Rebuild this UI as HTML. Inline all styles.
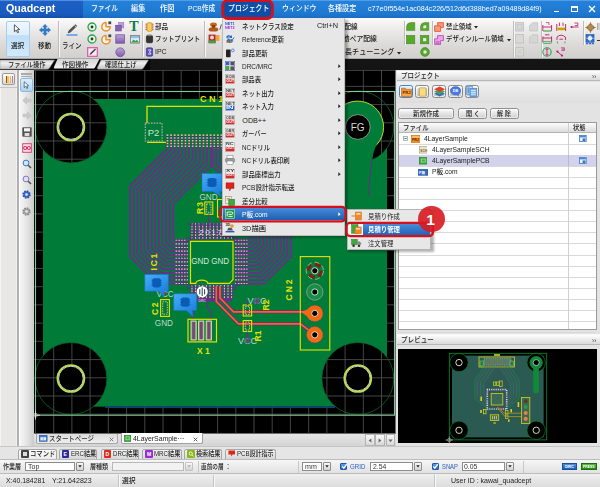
<!DOCTYPE html>
<html lang="ja"><head><meta charset="utf-8"><title>Quadcept</title>
<style>
html,body{margin:0;padding:0;}
body{width:600px;height:487px;overflow:hidden;position:relative;background:#e4e4e4;font-family:"Liberation Sans","Noto Sans CJK JP",sans-serif;}
.b{position:absolute;box-sizing:border-box;}
.t{position:absolute;white-space:nowrap;display:block;}
#app{position:absolute;left:0;top:0;width:600px;height:487px;overflow:hidden;}
</style></head><body><div id="app">
<svg class="b" style="left:0px;top:0px;" width="600" height="487" viewBox="0 0 600 487"><defs><linearGradient id="cog" x1="0" y1="0" x2="0.6" y2="1"><stop offset="0" stop-color="#46aefa"/><stop offset="1" stop-color="#1a7edc"/></linearGradient><clipPath id="cv"><rect x="33.5" y="70" width="362.5" height="363.7"/></clipPath><mask id="fillm"><rect x="43" y="98.9" width="344" height="307.9" fill="#fff"/><circle cx="70.9" cy="127" r="36" fill="#000"/><circle cx="357.8" cy="127" r="36" fill="#000"/><circle cx="70.9" cy="378.5" r="36" fill="#000"/><circle cx="357.8" cy="378.5" r="36" fill="#000"/><rect x="357.8" y="90" width="40" height="37" fill="#000"/><rect x="30" y="90" width="40.9" height="37" fill="#000"/><rect x="30" y="378.5" width="40.9" height="37" fill="#000"/><rect x="357.8" y="378.5" width="40" height="37" fill="#000"/></mask></defs><g clip-path="url(#cv)"><rect x="33.5" y="70" width="362.5" height="363.7" fill="#000"/><path d="M35.5 70V433.7M53.7 70V433.7M71.9 70V433.7M90.1 70V433.7M108.3 70V433.7M126.6 70V433.7M144.8 70V433.7M163.0 70V433.7M181.2 70V433.7M199.4 70V433.7M217.6 70V433.7M235.8 70V433.7M254.0 70V433.7M272.2 70V433.7M290.4 70V433.7M308.7 70V433.7M326.9 70V433.7M345.1 70V433.7M363.3 70V433.7M381.5 70V433.7M33.5 86.4H396M33.5 104.6H396M33.5 122.8H396M33.5 141.0H396M33.5 159.2H396M33.5 177.5H396M33.5 195.7H396M33.5 213.9H396M33.5 232.1H396M33.5 250.3H396M33.5 268.5H396M33.5 286.7H396M33.5 304.9H396M33.5 323.1H396M33.5 341.3H396M33.5 359.6H396M33.5 377.8H396M33.5 396.0H396M33.5 414.2H396M33.5 70.4H396" stroke="#505050" stroke-width="0.85" fill="none"/><rect x="43" y="98.9" width="344" height="307.9" fill="#007c38" mask="url(#fillm)"/><path d="M105 407.3H335" stroke="#0c3c94" stroke-width="1.3"/><circle cx="70.9" cy="127" r="36" fill="none" stroke="#066a2c" stroke-width="0.8"/><circle cx="357.8" cy="127" r="36" fill="none" stroke="#066a2c" stroke-width="0.8"/><circle cx="70.9" cy="378.5" r="36" fill="none" stroke="#066a2c" stroke-width="0.8"/><circle cx="357.8" cy="378.5" r="36" fill="none" stroke="#066a2c" stroke-width="0.8"/><circle cx="70.9" cy="127" r="13.4" fill="#000" stroke="#b6de4c" stroke-width="1.9"/><circle cx="70.9" cy="127" r="12.3" fill="none" stroke="#e2e6dc" stroke-width="0.9"/><circle cx="70.9" cy="378.5" r="13.4" fill="#000" stroke="#b6de4c" stroke-width="1.9"/><circle cx="70.9" cy="378.5" r="12.3" fill="none" stroke="#e2e6dc" stroke-width="0.9"/><circle cx="357.8" cy="378.5" r="13.4" fill="#000" stroke="#b6de4c" stroke-width="1.9"/><circle cx="357.8" cy="378.5" r="12.3" fill="none" stroke="#e2e6dc" stroke-width="0.9"/><rect x="35.5" y="91.5" width="359" height="323.7" fill="none" stroke="#86c79a" stroke-width="1.1"/><path d="M31.5 415.2H40M35.5 410.6V419.6" stroke="#ddd" stroke-width="1" fill="none"/><circle cx="35.5" cy="415.2" r="2" fill="none" stroke="#ccc" stroke-width="0.6"/><path d="M345.5 150L345.5 250L368 250L368.6 200Q369.5 172 372.2 159.5Q373.5 150 377 144.4A26 26 0 1 0 338 144Z" fill="#007c38"/><circle cx="357.8" cy="127" r="26" fill="#007c38"/><path d="M376.8 144.6A26 26 0 1 0 334 138" fill="none" stroke="#c9dc2a" stroke-width="0.9"/><path d="M372.2 159.5Q369.6 174 368.7 196" fill="none" stroke="#6b2a8c" stroke-width="1"/><circle cx="357.8" cy="127" r="12.4" fill="#000" stroke="#bdbdbd" stroke-width="0.7"/><text x="357.6" y="130.6" font-size="10" fill="#d8d8d8" text-anchor="middle" font-family='"Liberation Sans","Noto Sans CJK JP",sans-serif'>FG</text><path d="M147 123V106.3H300" fill="none" stroke="#e6e000" stroke-width="1.3"/><path d="M147 142.3H166.5" fill="none" stroke="#e6e000" stroke-width="1.3"/><text x="200" y="101.6" font-size="9" fill="#e6e000" font-weight="700" letter-spacing="2.6" font-family='"Liberation Sans","Noto Sans CJK JP",sans-serif'>CN1</text><rect x="145.3" y="123.2" width="16.8" height="17.8" fill="#007c38" stroke="#b9a7b0" stroke-width="1.2" stroke-dasharray="1.6 1.2"/><text x="153.6" y="136" font-size="9.5" fill="#cfe3d2" text-anchor="middle" font-family='"Liberation Sans","Noto Sans CJK JP",sans-serif'>P2</text><rect x="166.2" y="134.6" width="122.8" height="13.8" fill="#007c38"/><path d="M167.50 134.6V148.2M171.10 134.6V148.2M174.70 134.6V148.2M178.30 134.6V148.2M181.90 134.6V148.2M185.50 134.6V148.2M189.10 134.6V148.2M192.70 134.6V148.2M196.30 134.6V148.2M199.90 134.6V148.2M203.50 134.6V148.2M207.10 134.6V148.2M210.70 134.6V148.2M214.30 134.6V148.2M217.90 134.6V148.2M221.50 134.6V148.2M225.10 134.6V148.2M228.70 134.6V148.2M232.30 134.6V148.2M235.90 134.6V148.2M239.50 134.6V148.2M243.10 134.6V148.2M246.70 134.6V148.2M250.30 134.6V148.2M253.90 134.6V148.2M257.50 134.6V148.2M261.10 134.6V148.2M264.70 134.6V148.2M268.30 134.6V148.2M271.90 134.6V148.2M275.50 134.6V148.2M279.10 134.6V148.2M282.70 134.6V148.2M286.30 134.6V148.2" stroke="#4a2a7a" stroke-width="2" fill="none"/><path d="M167.50 134.6V148.2M171.10 134.6V148.2M174.70 134.6V148.2M178.30 134.6V148.2M181.90 134.6V148.2M185.50 134.6V148.2M189.10 134.6V148.2M192.70 134.6V148.2M196.30 134.6V148.2M199.90 134.6V148.2M203.50 134.6V148.2M207.10 134.6V148.2M210.70 134.6V148.2M214.30 134.6V148.2M217.90 134.6V148.2M221.50 134.6V148.2M225.10 134.6V148.2M228.70 134.6V148.2M232.30 134.6V148.2M235.90 134.6V148.2M239.50 134.6V148.2M243.10 134.6V148.2M246.70 134.6V148.2M250.30 134.6V148.2M253.90 134.6V148.2M257.50 134.6V148.2M261.10 134.6V148.2M264.70 134.6V148.2M268.30 134.6V148.2M271.90 134.6V148.2M275.50 134.6V148.2M279.10 134.6V148.2M282.70 134.6V148.2M286.30 134.6V148.2" stroke="#d8cc84" stroke-width="1.7" stroke-dasharray="1.5 1.2" fill="none"/><path d="M166.4 135H288.8" stroke="#b9ad8a" stroke-width="0.9" stroke-dasharray="1.8 1.8" fill="none"/><path d="M167.50 147L167.50 148.50L130.00 186.00L130.00 256.90L156.80 283.70L177 283.70M171.10 147L171.10 149.99L133.60 187.49L133.60 255.41L158.29 280.10L177 280.10M174.70 147L174.70 151.48L137.20 188.98L137.20 253.92L159.78 276.50L177 276.50M178.30 147L178.30 152.97L140.80 190.47L140.80 252.43L161.27 272.90L177 272.90M181.90 147L181.90 154.46L144.40 191.96L144.40 250.94L162.76 269.30L177 269.30M185.50 147L185.50 155.95L148.00 193.45L148.00 249.45L164.25 265.70L177 265.70M189.10 147L189.10 157.44L151.60 194.94L151.60 247.96L165.74 262.10L177 262.10M192.70 147L192.70 158.93L155.20 196.43L155.20 246.47L167.23 258.50L177 258.50M196.30 147L196.30 160.42L158.80 197.92L158.80 244.98L168.72 254.90L177 254.90M199.90 147L199.90 161.91L162.40 199.41L162.40 243.49L170.21 251.30L177 251.30M203.50 147L203.50 163.40L166.00 200.90L166.00 242.00L171.70 247.70L177 247.70M207.10 147L207.10 164.89L169.60 202.39L169.60 240.51L173.19 244.10L177 244.10M210.70 147L210.70 166.38L173.20 203.88L173.20 239.02L174.68 240.50L177 240.50M255.90 147L255.90 148.50L290.80 183.40L290.80 256.90L264.00 283.70L246.5 283.70M252.30 147L252.30 149.99L287.35 185.04L287.35 255.41L262.66 280.10L246.5 280.10M248.70 147L248.70 151.48L283.90 186.68L283.90 253.92L261.32 276.50L246.5 276.50M245.10 147L245.10 152.97L280.45 188.32L280.45 252.43L259.98 272.90L246.5 272.90M241.50 147L241.50 154.46L277.00 189.96L277.00 250.94L258.64 269.30L246.5 269.30M237.90 147L237.90 155.95L273.55 191.60L273.55 249.45L257.30 265.70L246.5 265.70M234.30 147L234.30 157.44L270.10 193.24L270.10 247.96L255.96 262.10L246.5 262.10M230.70 147L230.70 158.93L266.65 194.88L266.65 246.47L254.62 258.50L246.5 258.50M227.10 147L227.10 160.42L263.20 196.52L263.20 244.98L253.28 254.90L246.5 254.90M223.50 147L223.50 161.91L259.75 198.16L259.75 243.49L251.94 251.30L246.5 251.30M219.90 147L219.90 163.40L256.30 199.80L256.30 242.00L250.60 247.70L246.5 247.70M216.30 147L216.30 164.89L252.85 201.44L252.85 240.51L249.26 244.10L246.5 244.10M212.70 147L212.70 166.38L249.40 203.08L249.40 239.02L247.92 240.50L246.5 240.50" fill="none" stroke="#6a2d8a" stroke-width="1.9" stroke-linejoin="round"/><rect x="174.5" y="238.5" width="74" height="48" fill="none"/><path d="M175.5 240.30H188M235 240.30H247.5M175.5 243.90H188M235 243.90H247.5M175.5 247.50H188M235 247.50H247.5M175.5 251.10H188M235 251.10H247.5M175.5 254.70H188M235 254.70H247.5M175.5 258.30H188M235 258.30H247.5M175.5 261.90H188M235 261.90H247.5M175.5 265.50H188M235 265.50H247.5M175.5 269.10H188M235 269.10H247.5M175.5 272.70H188M235 272.70H247.5M175.5 276.30H188M235 276.30H247.5M175.5 279.90H188M235 279.90H247.5M175.5 283.50H188M235 283.50H247.5" stroke="#5e2a88" stroke-width="2.7" fill="none"/><path d="M175.5 240.30H188M235 240.30H247.5M175.5 243.90H188M235 243.90H247.5M175.5 247.50H188M235 247.50H247.5M175.5 251.10H188M235 251.10H247.5M175.5 254.70H188M235 254.70H247.5M175.5 258.30H188M235 258.30H247.5M175.5 261.90H188M235 261.90H247.5M175.5 265.50H188M235 265.50H247.5M175.5 269.10H188M235 269.10H247.5M175.5 272.70H188M235 272.70H247.5M175.5 276.30H188M235 276.30H247.5M175.5 279.90H188M235 279.90H247.5M175.5 283.50H188M235 283.50H247.5" stroke="#d8ce98" stroke-width="1.1" stroke-dasharray="1.7 1.1" fill="none"/><path d="M192.00 223V239.5M192.00 285V299M195.60 223V239.5M195.60 285V299M199.20 223V239.5M199.20 285V299M202.80 223V239.5M202.80 285V299M206.40 223V239.5M206.40 285V299M210.00 223V239.5M210.00 285V299M213.60 223V239.5M213.60 285V299M217.20 223V239.5M217.20 285V299M220.80 223V239.5M220.80 285V299M224.40 223V239.5M224.40 285V299M228.00 223V239.5M228.00 285V299M231.60 223V239.5M231.60 285V299" stroke="#5e2a88" stroke-width="2.7" fill="none"/><path d="M192.00 223V239.5M192.00 285V299M195.60 223V239.5M195.60 285V299M199.20 223V239.5M199.20 285V299M202.80 223V239.5M202.80 285V299M206.40 223V239.5M206.40 285V299M210.00 223V239.5M210.00 285V299M213.60 223V239.5M213.60 285V299M217.20 223V239.5M217.20 285V299M220.80 223V239.5M220.80 285V299M224.40 223V239.5M224.40 285V299M228.00 223V239.5M228.00 285V299M231.60 223V239.5M231.60 285V299" stroke="#d8ce98" stroke-width="1.1" stroke-dasharray="1.7 1.1" fill="none"/><rect x="195" y="298" width="37" height="3.4" fill="#6a2d8a"/><path d="M186.6 241.0L191.2 236.4M188.1 242.4L192.6 237.9M186.6 238.20000000000002L188.4 236.4" stroke="#5e2a88" stroke-width="1.2" stroke-dasharray="1.6 1" fill="none"/><path d="M232.6 241.0L237.2 236.4M234.1 242.4L238.6 237.9M232.6 238.20000000000002L234.4 236.4" stroke="#5e2a88" stroke-width="1.2" stroke-dasharray="1.6 1" fill="none"/><path d="M186.6 288.0L191.2 283.4M188.1 289.4L192.6 284.9M186.6 285.2L188.4 283.4" stroke="#5e2a88" stroke-width="1.2" stroke-dasharray="1.6 1" fill="none"/><path d="M232.6 288.0L237.2 283.4M234.1 289.4L238.6 284.9M232.6 285.2L234.4 283.4" stroke="#5e2a88" stroke-width="1.2" stroke-dasharray="1.6 1" fill="none"/><path d="M188 224H234" stroke="#5e2a88" stroke-width="1.6" stroke-dasharray="1.6 1.2" fill="none"/><path d="M190.5 241.3H233V279.5L229.5 283.3H207.8A6 3.2 0 0 0 195.8 283.3H190.5Z" fill="#007c38" stroke="#e6e000" stroke-width="1.2"/><text x="210.2" y="264.4" font-size="9.6" fill="#d4e6d8" text-anchor="middle" textLength="38" lengthAdjust="spacingAndGlyphs" font-family='"Liberation Sans","Noto Sans CJK JP",sans-serif'>GND GND</text><text x="0" y="0" font-size="8" fill="#e6e6e6" font-family='"Liberation Sans","Noto Sans CJK JP",sans-serif' letter-spacing="1.5" transform="translate(199.3 235.4)">2017</text><text font-size="9" fill="#e6e000" font-weight="700" letter-spacing="1.5" font-family='"Liberation Sans","Noto Sans CJK JP",sans-serif' transform="translate(157.3 270.5) rotate(-90)">IC1</text><circle cx="202.2" cy="291.8" r="5.6" fill="#fff"/><path d="M202.2 287.6V296M199.8 289.2V294.4M204.6 289.2V294.4" stroke="#245" stroke-width="1"/><text x="202.2" y="301.8" font-size="3.4" fill="#eee" text-anchor="middle" font-family='"Liberation Sans","Noto Sans CJK JP",sans-serif'>DRC</text><path d="M216.3 286V301.5L238.5 323.8H300.5L314.8 334.8" fill="none" stroke="#6a2d8a" stroke-width="3.6" stroke-linejoin="round"/><path d="M220 286V298L233.5 311.8H314" fill="none" stroke="#6a2d8a" stroke-width="3.6" stroke-linejoin="round"/><path d="M216.3 286V301.5L238.5 323.8H300.5L314.8 334.8" fill="none" stroke="#f26a10" stroke-width="1.7" stroke-linejoin="round"/><path d="M220 286V298L233.5 311.8H314" fill="none" stroke="#f26a10" stroke-width="1.7" stroke-linejoin="round"/><rect x="243.2" y="305" width="8.4" height="11" fill="none" stroke="#e6e000" stroke-width="1.1"/><rect x="245.3" y="306.6" width="4.2" height="7.8" fill="none" stroke="#d8cf9a" stroke-width="0.9" stroke-dasharray="1.4 1"/><rect x="243.2" y="320.5" width="8.4" height="11" fill="none" stroke="#e6e000" stroke-width="1.1"/><rect x="245.3" y="322.1" width="4.2" height="7.8" fill="none" stroke="#d8cf9a" stroke-width="0.9" stroke-dasharray="1.4 1"/><path d="M247.4 300V305M247.4 331.5V340" stroke="#6a2d8a" stroke-width="1.2"/><text x="247.5" y="304.3" font-size="9" fill="#bfd8c6" font-family='"Liberation Sans","Noto Sans CJK JP",sans-serif'>VCC</text><circle cx="257" cy="301" r="2.6" fill="none" stroke="#3b3bd0" stroke-width="0.9"/><circle cx="257" cy="301" r="1.5" fill="none" stroke="#c0392b" stroke-width="0.8"/><text x="238" y="343.6" font-size="9" fill="#bfd8c6" font-family='"Liberation Sans","Noto Sans CJK JP",sans-serif'>VCC</text><circle cx="247.4" cy="340.6" r="2.6" fill="none" stroke="#3b3bd0" stroke-width="0.9"/><circle cx="247.4" cy="340.6" r="1.5" fill="none" stroke="#c0392b" stroke-width="0.8"/><text font-size="8.5" fill="#e6e000" font-weight="700" font-family='"Liberation Sans","Noto Sans CJK JP",sans-serif' transform="translate(269.2 310.5) rotate(-90)">R2</text><text font-size="8.5" fill="#e6e000" font-weight="700" font-family='"Liberation Sans","Noto Sans CJK JP",sans-serif' transform="translate(261 341.5) rotate(-90)">R1</text><path d="M196.5 300V308L193 311.5V319M207.5 300V308L211 311.5V319" fill="none" stroke="#6a2d8a" stroke-width="1.2"/><rect x="188" y="319.3" width="28.5" height="22.6" fill="#007c38" stroke="#e6e000" stroke-width="1.2"/><rect x="191" y="321" width="5.2" height="19" fill="#8f8a6a" stroke="#e9e2b0" stroke-width="0.9"/><rect x="192.3" y="322" width="2.6" height="17" fill="#6a2d8a" opacity="0.75"/><rect x="198.6" y="321" width="5.2" height="19" fill="#8f8a6a" stroke="#e9e2b0" stroke-width="0.9"/><rect x="199.9" y="322" width="2.6" height="17" fill="#6a2d8a" opacity="0.75"/><rect x="206.2" y="321" width="5.2" height="19" fill="#8f8a6a" stroke="#e9e2b0" stroke-width="0.9"/><rect x="207.5" y="322" width="2.6" height="17" fill="#6a2d8a" opacity="0.75"/><text x="197" y="353.6" font-size="8.5" fill="#e6e000" font-weight="700" letter-spacing="2.4" font-family='"Liberation Sans","Noto Sans CJK JP",sans-serif'>X1</text><rect x="160.6" y="299.6" width="8.8" height="16.8" fill="none" stroke="#e6e000" stroke-width="1.1"/><rect x="162.7" y="301.8" width="4.6" height="12.4" fill="none" stroke="#d8cf9a" stroke-width="0.9" stroke-dasharray="1.4 1"/><text font-size="8.5" fill="#e6e000" font-weight="700" letter-spacing="1.6" font-family='"Liberation Sans","Noto Sans CJK JP",sans-serif' transform="translate(157.8 315) rotate(-90)">C2</text><text x="154.8" y="326.4" font-size="8.2" fill="#bfd8c6" font-family='"Liberation Sans","Noto Sans CJK JP",sans-serif'>GND</text><text x="156.5" y="296.6" font-size="8.2" fill="#bfd8c6" font-family='"Liberation Sans","Noto Sans CJK JP",sans-serif'>VCC</text><circle cx="165" cy="293.4" r="1.3" fill="#c22"/><text x="199.5" y="199.6" font-size="8.2" fill="#bfd8c6" font-family='"Liberation Sans","Noto Sans CJK JP",sans-serif'>GND</text><rect x="204.8" y="202" width="8" height="12.3" fill="none" stroke="#e6e000" stroke-width="1.1"/><rect x="206.6" y="204" width="4.4" height="8.3" fill="none" stroke="#d8cf9a" stroke-width="0.9" stroke-dasharray="1.4 1"/><rect x="217.5" y="199.5" width="8" height="17.5" fill="none" stroke="#e6e000" stroke-width="1.1"/><path d="M208.8 214.5V228" stroke="#6a2d8a" stroke-width="1.2"/><text font-size="8.5" fill="#e6e000" font-weight="700" letter-spacing="1" font-family='"Liberation Sans","Noto Sans CJK JP",sans-serif' transform="translate(202.6 214) rotate(-90)">R3</text><path d="M202 173.5H222V191.5H219L222 197L213 191.5H202Z" fill="url(#cog)" stroke="#1672cc" stroke-width="0.5"/><rect x="207.7" y="177.9" width="8.6" height="9.2" rx="2.4" fill="#0c5cb4"/><path d="M206.8 179.9h10.4M206.8 182.5h10.4M206.8 185.1h10.4" stroke="#0c5cb4" stroke-width="0.8"/><path d="M144.8 274.4H168.4V291.2H164.5L164 297L158.5 291.2H144.8Z" fill="url(#cog)" stroke="#1672cc" stroke-width="0.5"/><rect x="152.3" y="278.19999999999993" width="8.6" height="9.2" rx="2.4" fill="#0c5cb4"/><path d="M151.40000000000003 280.19999999999993h10.4M151.40000000000003 282.79999999999995h10.4M151.40000000000003 285.4h10.4" stroke="#0c5cb4" stroke-width="0.8"/><path d="M173.7 293.8H196.7V310.6H192.5L193 317L186.5 310.6H173.7Z" fill="url(#cog)" stroke="#1672cc" stroke-width="0.5"/><rect x="180.89999999999998" y="297.59999999999997" width="8.6" height="9.2" rx="2.4" fill="#0c5cb4"/><path d="M180.0 299.59999999999997h10.4M180.0 302.2h10.4M180.0 304.8h10.4" stroke="#0c5cb4" stroke-width="0.8"/><rect x="300.3" y="256.6" width="29.5" height="93.4" fill="none" stroke="#e6e000" stroke-width="1.1"/><text font-size="8.5" fill="#e6e000" font-weight="700" letter-spacing="2" font-family='"Liberation Sans","Noto Sans CJK JP",sans-serif' transform="translate(292.4 300.5) rotate(-90)">CN2</text><circle cx="314.8" cy="270.8" r="8.2" fill="#0d7a35"/><circle cx="314.8" cy="270.8" r="6.6" fill="none" stroke="#7a2418" stroke-width="3.2" stroke-dasharray="6.5 3.8"/><circle cx="314.8" cy="270.8" r="8.6" fill="none" stroke="#cfd8b0" stroke-width="0.7" stroke-dasharray="5 3"/><circle cx="314.8" cy="292" r="8.2" fill="#14913f" stroke="#8a8f9a" stroke-width="1"/><circle cx="314.8" cy="313.4" r="8.2" fill="#f26a10" stroke="#6b3a8c" stroke-width="0.7" stroke-dasharray="1.2 1.2"/><circle cx="314.8" cy="334.8" r="8.2" fill="#f26a10" stroke="#6b3a8c" stroke-width="0.7" stroke-dasharray="1.2 1.2"/><path d="M301 311.8L310 308.6V318.4Z" fill="#f26a10"/><circle cx="314.8" cy="270.8" r="3.1" fill="#000" stroke="#e8e8e8" stroke-width="0.9"/><circle cx="314.8" cy="292" r="3.1" fill="#000" stroke="#e8e8e8" stroke-width="0.9"/><circle cx="314.8" cy="313.4" r="3.1" fill="#000" stroke="#e8e8e8" stroke-width="0.9"/><circle cx="314.8" cy="334.8" r="3.1" fill="#000" stroke="#e8e8e8" stroke-width="0.9"/></g></svg>
<div class="b" style="left:0px;top:0px;width:600px;height:17.5px;background:linear-gradient(#2482da 0,#1f78d0 75%,#1b6cc2 100%);"></div>
<div class="b" style="left:0px;top:0px;width:83px;height:17.5px;background:linear-gradient(#1d60c6 0,#1b5abe 75%,#154fa8 100%);"></div>
<div class="b" style="left:0px;top:0px;width:600px;height:0.8px;background:rgba(120,180,240,0.55);"></div>
<span class="t" style="left:5.5px;top:0.30px;font-size:10.8px;line-height:16.20px;color:#fff;font-weight:700;transform:scaleX(0.9900);transform-origin:left center;">Quadcept</span>
<span class="t" style="left:90.5px;top:3.45px;font-size:7.8px;line-height:11.70px;color:#fff;font-weight:500;transform:scaleX(0.8710);transform-origin:left center;">ファイル</span>
<span class="t" style="left:131px;top:3.45px;font-size:7.8px;line-height:11.70px;color:#fff;font-weight:500;transform:scaleX(0.9187);transform-origin:left center;">編集</span>
<span class="t" style="left:160px;top:3.45px;font-size:7.8px;line-height:11.70px;color:#fff;font-weight:500;transform:scaleX(0.9375);transform-origin:left center;">作図</span>
<span class="t" style="left:188px;top:3.45px;font-size:7.8px;line-height:11.70px;color:#fff;font-weight:500;transform:scaleX(0.8594);transform-origin:left center;">PCB作成</span>
<span class="t" style="left:281.5px;top:3.45px;font-size:7.8px;line-height:11.70px;color:#fff;font-weight:500;transform:scaleX(0.8846);transform-origin:left center;">ウィンドウ</span>
<span class="t" style="left:328px;top:3.45px;font-size:7.8px;line-height:11.70px;color:#fff;font-weight:500;transform:scaleX(0.9032);transform-origin:left center;">各種設定</span>
<span class="t" style="left:367.5px;top:3.90px;font-size:7.2px;line-height:10.80px;color:#fff;font-weight:500;transform:scaleX(0.9914);transform-origin:left center;">c77e0f554e1ac084c226/512d6d388bed7a09489d84f9)</span>
<svg class="b" style="left:215px;top:0px;z-index:5;" width="66" height="26" viewBox="0 0 66 26"><rect x="7.75" y="0.6" width="49.6" height="17.9" rx="5" fill="#0d4fa8" stroke="#d4101c" stroke-width="2.9"/></svg>
<span class="t" style="left:227.5px;top:3.45px;font-size:7.8px;line-height:11.70px;color:#fff;font-weight:500;transform:scaleX(0.8830);transform-origin:left center;z-index:6;">プロジェクト</span>
<div class="b" style="left:554.2px;top:10.8px;width:5.2px;height:1.3px;background:#fff;"></div>
<div class="b" style="left:571px;top:5.5px;width:6.5px;height:6.5px;border:1px solid #fff;border-top:2px solid #fff;"></div>
<svg class="b" style="left:587.5px;top:5px;" width="8" height="8" viewBox="0 0 8 8"><path d="M1 1 L7 7 M7 1 L1 7" stroke="#fff" stroke-width="1.4" fill="none"/></svg>
<div class="b" style="left:0px;top:17.5px;width:600px;height:41.5px;background:linear-gradient(#fbfbfb 0,#ecebea 30%,#dddcdb 62%,#d1d0cf 100%);border-bottom:1px solid #a8a8a8;"></div>
<div class="b" style="left:5.5px;top:20.5px;width:24.5px;height:36.5px;border:1px solid #a8cdea;border-radius:2px;background:linear-gradient(#eef7fe 0,#ddeefb 38%,#bfdff8 40%,#d2e9fb 100%);"></div>
<svg class="b" style="left:13px;top:24px;" width="8" height="10" viewBox="0 0 8 10"><path d="M1.4 0.8L1.4 7.8L3.2 6.1L4.5 8.8L5.6 8.3L4.4 5.7L6.6 5.5Z" fill="#fff" stroke="#333" stroke-width="0.8" stroke-linejoin="round"/></svg>
<span class="t" style="left:11px;top:40.82px;font-size:7.3px;line-height:10.95px;color:#1a1a1a;font-weight:500;transform:scaleX(0.9000);transform-origin:left center;">選択</span>
<svg class="b" style="left:39px;top:24px;" width="12" height="12" viewBox="0 0 12 12"><path d="M6 0.3L8.3 3H7V5H9V3.7L11.7 6L9 8.3V7H7V9H8.3L6 11.7L3.7 9H5V7H3V8.3L0.3 6L3 3.7V5H5V3H3.7Z" fill="#2f7fd0" stroke="#1f5fa8" stroke-width="0.4"/></svg>
<span class="t" style="left:38px;top:40.82px;font-size:7.3px;line-height:10.95px;color:#1a1a1a;font-weight:500;transform:scaleX(0.9000);transform-origin:left center;">移動</span>
<div class="b" style="left:57.5px;top:21px;width:1px;height:35.5px;background:#bdbdbd;box-shadow:1px 0 0 #f8f8f8;"></div>
<svg class="b" style="left:65px;top:23px;" width="14" height="14" viewBox="0 0 14 14"><path d="M1.5 12H12.5" stroke="#3b8be0" stroke-width="1.3"/><path d="M3 10L4 7.6L10.3 1.6L11.8 3L5.4 9.2Z" fill="#555" stroke="#222" stroke-width="0.4"/><path d="M9.4 2.4L11 4" stroke="#ddd" stroke-width="0.8"/></svg>
<span class="t" style="left:62px;top:40.82px;font-size:7.3px;line-height:10.95px;color:#1a1a1a;font-weight:500;transform:scaleX(0.8864);transform-origin:left center;">ライン</span>
<svg class="b" style="left:87px;top:21.5px;" width="10" height="10" viewBox="0 0 10 10"><circle cx="5" cy="5" r="4" fill="#e8f6e8" stroke="#2aa54a" stroke-width="1.3"/><circle cx="5" cy="5" r="1.4" fill="#333"/></svg>
<svg class="b" style="left:87px;top:34px;" width="10" height="10" viewBox="0 0 10 10"><circle cx="5" cy="5" r="4" fill="#e8f6e8" stroke="#2aa54a" stroke-width="1.3"/><circle cx="5" cy="5" r="1.4" fill="#333"/></svg>
<svg class="b" style="left:87px;top:47px;" width="11" height="10" viewBox="0 0 11 10"><rect x="0.7" y="0.7" width="9.6" height="8.6" fill="#fbeaf5" stroke="#d45aa6" stroke-width="1.2"/><path d="M2.5 8L3.3 6L8 1.6L9 2.6L4.4 7.2Z" fill="#444"/></svg>
<svg class="b" style="left:101px;top:21px;" width="11" height="11" viewBox="0 0 11 11"><path d="M5 1.6A4.2 4.2 0 1 0 9.2 5.8H5Z" fill="#fff6e8" stroke="#e8922e" stroke-width="1.5" stroke-linejoin="round"/><rect x="7.4" y="0.4" width="2.8" height="2.8" fill="#444"/></svg>
<svg class="b" style="left:101px;top:33.5px;" width="11" height="11" viewBox="0 0 11 11"><path d="M5 1.6A4.2 4.2 0 1 0 9.2 5.8H5Z" fill="#fff6e8" stroke="#e8922e" stroke-width="1.5" stroke-linejoin="round"/><rect x="7.4" y="0.4" width="2.8" height="2.8" fill="#444"/></svg>
<svg class="b" style="left:115.3px;top:21.8px;" width="10" height="10" viewBox="0 0 10 10"><rect x="3.6" y="0.5" width="5.2" height="5.4" fill="#b9a0d8" stroke="#8a68b8" stroke-width="0.5"/><rect x="0.5" y="3.2" width="5.8" height="5.8" fill="#8562b4" stroke="#64448f" stroke-width="0.5"/></svg>
<svg class="b" style="left:115px;top:34.4px;" width="11" height="11" viewBox="0 0 11 11"><defs><linearGradient id="pg" x1="0" y1="0" x2="0" y2="1"><stop offset="0" stop-color="#bda6dc"/><stop offset="1" stop-color="#7d5cac"/></linearGradient></defs><rect x="0.8" y="0.8" width="8.6" height="8.4" fill="url(#pg)" stroke="#74529f" stroke-width="0.8"/></svg>
<svg class="b" style="left:115px;top:46.5px;" width="11" height="11" viewBox="0 0 11 11"><circle cx="5.2" cy="5.3" r="4.4" fill="url(#pg)" stroke="#74529f" stroke-width="0.8"/></svg>
<span class="t" style="left:129.2px;top:16.40px;font-size:14px;line-height:21.00px;color:#0a7a46;font-weight:700;font-family:'Liberation Serif',serif;">T</span>
<svg class="b" style="left:129.5px;top:34.5px;" width="10" height="9" viewBox="0 0 10 9"><rect x="0.5" y="0.5" width="9" height="7.6" fill="#dfeefa" stroke="#777" stroke-width="0.8"/><path d="M1 7.6L3.6 4.4L5.4 6L7 4.8L9 7.6Z" fill="#3f9d4b"/><rect x="1" y="1" width="8" height="2.2" fill="#8cc0ea"/></svg>
<div class="b" style="left:141.5px;top:21px;width:1px;height:35.5px;background:#bdbdbd;box-shadow:1px 0 0 #f8f8f8;"></div>
<svg class="b" style="left:144.5px;top:21.5px;" width="9" height="10" viewBox="0 0 9 10"><rect x="2" y="0.8" width="5" height="8.4" rx="1" fill="#f4d25a" stroke="#b88a1a" stroke-width="0.7"/><path d="M0.4 2.2H2M0.4 4H2M0.4 5.8H2M0.4 7.6H2M7 2.2H8.6M7 4H8.6M7 5.8H8.6M7 7.6H8.6" stroke="#c33" stroke-width="0.7"/></svg>
<span class="t" style="left:155px;top:21.73px;font-size:7.3px;line-height:10.95px;color:#1a1a1a;font-weight:500;transform:scaleX(0.9000);transform-origin:left center;">部品</span>
<svg class="b" style="left:144.5px;top:34px;" width="9" height="10" viewBox="0 0 9 10"><rect x="1.4" y="1.4" width="6.2" height="7.4" rx="1.4" fill="#333" stroke="#111" stroke-width="0.6"/><rect x="2.4" y="0.6" width="4.2" height="1.4" fill="#888"/></svg>
<span class="t" style="left:155px;top:34.32px;font-size:7.3px;line-height:10.95px;color:#1a1a1a;font-weight:500;transform:scaleX(0.8824);transform-origin:left center;">フットプリント</span>
<svg class="b" style="left:144.5px;top:46.5px;" width="9" height="10" viewBox="0 0 9 10"><rect x="1.4" y="0.8" width="6.2" height="8.4" rx="1.2" fill="#5a52b8" stroke="#2f2a86" stroke-width="0.6"/><path d="M3 3H6L4.5 5L6 7H3" fill="none" stroke="#fff" stroke-width="0.8"/></svg>
<span class="t" style="left:155px;top:47.02px;font-size:7.3px;line-height:10.95px;color:#1a1a1a;font-weight:500;transform:scaleX(0.9583);transform-origin:left center;">IPC</span>
<div class="b" style="left:204px;top:21px;width:1px;height:35.5px;background:#bdbdbd;box-shadow:1px 0 0 #f8f8f8;"></div>
<svg class="b" style="left:207.5px;top:21.5px;" width="11" height="10" viewBox="0 0 11 10"><ellipse cx="5.5" cy="2.6" rx="3.4" ry="2.2" fill="#c7641c"/><rect x="3.8" y="3" width="3.4" height="4" fill="#8a3d0c"/><ellipse cx="5.5" cy="7.4" rx="4.8" ry="2.2" fill="#b4551a"/></svg>
<svg class="b" style="left:207.5px;top:34px;" width="12" height="10" viewBox="0 0 12 10"><rect x="0.6" y="0.6" width="7" height="8.6" fill="#b7272b"/><circle cx="4" cy="3.6" r="2" fill="#f0d6c8"/><rect x="0.6" y="6.4" width="7" height="2.8" fill="#3fa248"/><rect x="8" y="1" width="3.4" height="6" fill="#f2a33a"/></svg>
<span class="t" style="left:219.3px;top:21.73px;font-size:7.3px;line-height:10.95px;color:#1a1a1a;font-weight:500;transform:scaleX(0.8636);transform-origin:left center;">パッド</span>
<span class="t" style="left:221px;top:34.32px;font-size:7.3px;line-height:10.95px;color:#1a1a1a;font-weight:500;transform:scaleX(0.8000);transform-origin:left center;">ビア</span>
<span class="t" style="right:242.7px;top:21.73px;font-size:7.3px;line-height:10.95px;color:#1a1a1a;font-weight:500;transform:scaleX(0.9000);transform-origin:right center;">配線</span>
<span class="t" style="right:223.7px;top:34.32px;font-size:7.3px;line-height:10.95px;color:#1a1a1a;font-weight:500;transform:scaleX(0.9318);transform-origin:right center;">差動ペア配線</span>
<span class="t" style="right:205.2px;top:47.02px;font-size:7.3px;line-height:10.95px;color:#1a1a1a;font-weight:500;transform:scaleX(0.9655);transform-origin:right center;">線長チューニング</span>
<svg class="b" style="left:396.5px;top:51.5px;" width="4" height="3" viewBox="0 0 4 3"><path d="M0 0H4L2 2.4Z" fill="#222"/></svg>
<div class="b" style="left:403.5px;top:21px;width:1px;height:24px;background:#bdbdbd;box-shadow:1px 0 0 #f8f8f8;"></div>
<svg class="b" style="left:405.8px;top:22px;" width="10" height="10" viewBox="0 0 10 10"><path d="M0.5 8.6V4.4Q0.8 1 4.6 0.5H8.8V8.6Z" fill="#58a82c" stroke="#3f8a1e" stroke-width="0.5"/></svg>
<svg class="b" style="left:419.8px;top:22px;" width="10" height="10" viewBox="0 0 10 10"><path d="M0.5 8.6V4.4Q0.8 1 4.6 0.5H8.8V8.6Z" fill="#58a82c" stroke="#3f8a1e" stroke-width="0.5"/><path d="M3.2 6.2V4.8Q3.4 3.4 5 3.2H6.2V6.2Z" fill="#eee"/></svg>
<svg class="b" style="left:405.8px;top:34.6px;" width="10" height="10" viewBox="0 0 10 10"><rect x="0.5" y="0.5" width="8.3" height="8.3" fill="#58a82c" stroke="#3f8a1e" stroke-width="0.6"/></svg>
<svg class="b" style="left:419.8px;top:34.6px;" width="10" height="10" viewBox="0 0 10 10"><rect x="0.5" y="0.5" width="8.3" height="8.3" fill="#58a82c" stroke="#3f8a1e" stroke-width="0.6"/><rect x="3.1" y="3.1" width="3.1" height="3.1" fill="#eee"/></svg>
<svg class="b" style="left:419.5px;top:46.8px;" width="10" height="10" viewBox="0 0 10 10"><circle cx="5" cy="5" r="4.4" fill="#58a82c" stroke="#3f8a1e" stroke-width="0.6"/><circle cx="5" cy="5" r="1.7" fill="#eee"/></svg>
<div class="b" style="left:431.5px;top:21px;width:1px;height:24px;background:#bdbdbd;box-shadow:1px 0 0 #f8f8f8;"></div>
<svg class="b" style="left:433.5px;top:21.5px;" width="10" height="10" viewBox="0 0 10 10"><path d="M3.6 0.6H9.4V5.6H6.6V9.4H0.6V3.8H3.6Z" fill="#f39a7a" stroke="#e2502a" stroke-width="0.8"/><path d="M4 3.8H6.4V5.6" fill="none" stroke="#e2502a" stroke-width="0.7"/></svg>
<span class="t" style="left:446px;top:21.73px;font-size:7.3px;line-height:10.95px;color:#1a1a1a;font-weight:500;transform:scaleX(0.8793);transform-origin:left center;">禁止領域</span>
<svg class="b" style="left:473.8px;top:25.8px;" width="4" height="3" viewBox="0 0 4 3"><path d="M0 0H4L2 2.4Z" fill="#222"/></svg>
<svg class="b" style="left:433.5px;top:34.5px;" width="10" height="10" viewBox="0 0 10 10"><path d="M3.6 0.6H9.4V5.6H6.6V9.4H0.6V3.8H3.6Z" fill="#e9a6e4" stroke="#c23bb8" stroke-width="0.8"/><path d="M1.6 6.8H5.6M1.6 8.2H5.6" stroke="#a02a98" stroke-width="0.6"/></svg>
<span class="t" style="left:446px;top:34.32px;font-size:7.3px;line-height:10.95px;color:#1a1a1a;font-weight:500;transform:scaleX(0.8788);transform-origin:left center;">デザインルール領域</span>
<svg class="b" style="left:506.5px;top:38.5px;" width="4" height="3" viewBox="0 0 4 3"><path d="M0 0H4L2 2.4Z" fill="#222"/></svg>
<div class="b" style="left:512.5px;top:21px;width:1px;height:35.5px;background:#bdbdbd;box-shadow:1px 0 0 #f8f8f8;"></div>
<svg class="b" style="left:515px;top:21.8px;" width="10" height="10" viewBox="0 0 10 10"><rect x="0.6" y="0.6" width="8" height="8.4" fill="#d9d9d9" stroke="#bdbdbd" stroke-width="0.8"/><rect x="2.4" y="2.6" width="4.4" height="4.4" fill="none" stroke="#c6c6c6" stroke-width="0.8"/></svg>
<svg class="b" style="left:529px;top:21.8px;" width="10" height="10" viewBox="0 0 10 10"><path d="M0.6 9V3.6L3.6 0.8H8.6V9Z" fill="#d6d6d6" stroke="#c2c2c2" stroke-width="0.7"/></svg>
<svg class="b" style="left:515px;top:34.4px;" width="10" height="10" viewBox="0 0 10 10"><rect x="0.6" y="0.6" width="8" height="8.4" fill="#d9d9d9" stroke="#bdbdbd" stroke-width="0.8"/></svg>
<svg class="b" style="left:529px;top:34.4px;" width="10" height="10" viewBox="0 0 10 10"><path d="M0.6 9V3.6L3.6 0.8H8.6V9Z" fill="#d6d6d6" stroke="#c2c2c2" stroke-width="0.7"/></svg>
<svg class="b" style="left:515px;top:47px;" width="10" height="10" viewBox="0 0 10 10"><rect x="0.6" y="0.6" width="8" height="8.4" fill="#d9d9d9" stroke="#bdbdbd" stroke-width="0.8"/><path d="M2.4 2.6L6.8 7M6.8 2.6L2.4 7" stroke="#c2c2c2" stroke-width="0.8"/></svg>
<div class="b" style="left:540.5px;top:21px;width:1px;height:35.5px;background:#bdbdbd;box-shadow:1px 0 0 #f8f8f8;"></div>
<svg class="b" style="left:542.3px;top:21.5px;" width="10.4" height="10" viewBox="0 0 10.4 10"><path d="M0.8 3V9M9.6 3V9M0.8 5H9.6" stroke="#c2186a" stroke-width="0.9" fill="none"/><path d="M1 9H9.4" stroke="#3fa248" stroke-width="1.1"/><path d="M4 0.6H7V3" stroke="#c2186a" stroke-width="0.7" fill="none"/></svg>
<svg class="b" style="left:556.4px;top:21.5px;" width="10.4" height="10" viewBox="0 0 10.4 10"><path d="M0.8 2V9M9.6 2V9M3.4 0.6V4M7 0.6V4" stroke="#c2186a" stroke-width="0.9" fill="none"/><rect x="1.4" y="5.6" width="7.6" height="2.6" fill="#c8a400"/></svg>
<svg class="b" style="left:570.3px;top:21.5px;" width="10.4" height="10" viewBox="0 0 10.4 10"><circle cx="1.6" cy="5" r="1.1" fill="#c2186a"/><path d="M1.6 5H8.6M4.4 1H7.8V3.6H4.8" stroke="#c2186a" stroke-width="0.8" fill="none"/></svg>
<svg class="b" style="left:542.3px;top:34.3px;" width="10.4" height="10" viewBox="0 0 10.4 10"><path d="M0.8 2.4V8M9.6 2.4V8M0.8 4H9.6M3 0.8H7.4" stroke="#c2186a" stroke-width="0.9" fill="none"/><rect x="0.8" y="7.6" width="8.8" height="1.8" rx="0.9" fill="none" stroke="#3fa248" stroke-width="0.8"/></svg>
<svg class="b" style="left:556.4px;top:34.3px;" width="10.4" height="10" viewBox="0 0 10.4 10"><path d="M1 3Q5 -0.6 9.4 3M1 3V6M9.4 3V6M3.4 5.2H7" stroke="#c2186a" stroke-width="0.9" fill="none"/><path d="M1.4 7.4V9.4M9 7.4V9.4" stroke="#3fa248" stroke-width="0.9"/></svg>
<svg class="b" style="left:542.3px;top:46.5px;" width="10.4" height="10" viewBox="0 0 10.4 10"><circle cx="5" cy="5" r="4.2" fill="none" stroke="#2aa54a" stroke-width="1.1"/><path d="M5 1.6V8.4M3.6 3L5 1.6L6.4 3M3.6 7L5 8.4L6.4 7" stroke="#c2186a" stroke-width="0.8" fill="none"/></svg>
<svg class="b" style="left:556.4px;top:46.5px;" width="10.4" height="10" viewBox="0 0 10.4 10"><path d="M1.4 4.6L6 8.6" stroke="#c2186a" stroke-width="0.9"/><circle cx="1.4" cy="4.6" r="1.1" fill="#c2186a"/><circle cx="6" cy="8.6" r="1.1" fill="#c2186a"/><path d="M5 0.8H8.4V3.4H5.4M5.6 2.1H8" stroke="#c2186a" stroke-width="0.7" fill="none"/></svg>
<div class="b" style="left:582.5px;top:21px;width:1px;height:24px;background:#bdbdbd;box-shadow:1px 0 0 #f8f8f8;"></div>
<svg class="b" style="left:584.5px;top:21.5px;" width="11" height="11" viewBox="0 0 11 11"><path d="M5.5 0.4L6.8 4.2L10.6 5.5L6.8 6.8L5.5 10.6L4.2 6.8L0.4 5.5L4.2 4.2Z" fill="#b98a4a" stroke="#8a5a22" stroke-width="0.5"/><circle cx="5.5" cy="5.5" r="3" fill="none" stroke="#8a5a22" stroke-width="0.7"/></svg>
<div class="b" style="left:596.5px;top:23px;width:3.5px;height:7px;background:#cfcfcf;border-left:1px solid #aaa;"></div>
<svg class="b" style="left:585px;top:34px;" width="10" height="11" viewBox="0 0 10 11"><rect x="1" y="0.6" width="8" height="7.6" fill="#2f6fd0" stroke="#1b4a9a" stroke-width="0.6"/><circle cx="5" cy="4.2" r="2.2" fill="#e8f0ff"/><path d="M5 0.8V7.8M1.2 4.2H8.8" stroke="#e8f0ff" stroke-width="0.6"/><path d="M1 9.6H9" stroke="#2f6fd0" stroke-width="1.4" stroke-dasharray="2.2 0.8"/></svg>
<div class="b" style="left:597px;top:40px;width:2.5px;height:1px;background:#333;"></div>
<div class="b" style="left:0px;top:59px;width:600px;height:11px;background:#141414;"></div>
<div class="b" style="left:0px;top:59px;width:150px;height:11px;background:#000;"></div>
<svg class="b" style="left:0px;top:58.5px;" width="150" height="12" viewBox="0 0 150 12"><defs><linearGradient id="tg1" x1="0" y1="0" x2="0" y2="1"><stop offset="0" stop-color="#d0d0d0"/><stop offset="0.35" stop-color="#efefef"/><stop offset="1" stop-color="#c4c4c4"/></linearGradient><linearGradient id="tg2" x1="0" y1="0" x2="0" y2="1"><stop offset="0" stop-color="#d6d6d6"/><stop offset="1" stop-color="#f0f0f0"/></linearGradient></defs><path d="M0 1H54.5L49.5 9Q48.6 10.2 47 10.2H0Z" fill="url(#tg1)" stroke="#8a8a8a" stroke-width="0.5"/><path d="M101 1H148.5L143.5 9Q142.6 10.2 141 10.2H98.5Q96.6 10.2 97.4 8.6Z" fill="url(#tg1)" stroke="#8a8a8a" stroke-width="0.5"/><path d="M57.5 0H99.5L95 8.4Q94.2 9.6 92.6 9.6H55Q53.2 9.6 54 8Z" fill="url(#tg2)"/></svg>
<div class="b" style="left:0px;top:68.8px;width:33.5px;height:2px;background:#3c3c3c;"></div>
<span class="t" style="left:8px;top:59.55px;font-size:7px;line-height:10.50px;color:#222;font-weight:500;transform:scaleX(0.8929);transform-origin:left center;">ファイル操作</span>
<span class="t" style="left:62px;top:59.55px;font-size:7px;line-height:10.50px;color:#222;font-weight:500;transform:scaleX(0.9464);transform-origin:left center;">作図操作</span>
<span class="t" style="left:105px;top:59.55px;font-size:7px;line-height:10.50px;color:#222;font-weight:500;transform:scaleX(0.9000);transform-origin:left center;">確認仕上げ</span>
<div class="b" style="left:0px;top:70px;width:16.5px;height:376px;background:#e8e7e5;border-left:1.5px solid #f4f4f4;border-right:1px solid #f0f0f0;"></div>
<div class="b" style="left:16.5px;top:70px;width:2px;height:376px;background:linear-gradient(90deg,#b8b8b8,#a4a4a4 60%,#c8c8c8);"></div>
<div class="b" style="left:18.5px;top:70px;width:1px;height:376px;background:#fdfdfd;"></div>
<div class="b" style="left:19.5px;top:70px;width:14px;height:376px;background:linear-gradient(90deg,#f6f6f6 0,#e4e4e4 50%,#cacaca 100%);"></div>
<div class="b" style="left:0px;top:86.6px;width:16.5px;height:1px;background:#c4c4c4;"></div>
<div class="b" style="left:2.2px;top:72.6px;width:12.8px;height:12.6px;border:1px solid #9a9a9a;border-radius:2px;background:linear-gradient(#fdfdfd,#d8d8d8);"></div>
<div class="b" style="left:5.5px;top:75.5px;width:1.5px;height:7.5px;background:#c33;"></div>
<div class="b" style="left:7.2px;top:75.5px;width:2px;height:7.5px;background:#f2d21a;"></div>
<div class="b" style="left:9.6px;top:75.5px;width:1.6px;height:7.5px;background:#bbb;"></div>
<div class="b" style="left:11.5px;top:75.5px;width:1px;height:7.5px;background:#d77;"></div>
<div class="b" style="left:21px;top:72.5px;width:11px;height:0.8px;background:#aaa;"></div>
<div class="b" style="left:21px;top:74.1px;width:11px;height:0.8px;background:#aaa;"></div>
<div class="b" style="left:21px;top:75.7px;width:11px;height:0.8px;background:#aaa;"></div>
<div class="b" style="left:20px;top:78px;width:12.5px;height:13.5px;border:1px solid #8db8dc;border-radius:2px;background:linear-gradient(#dcefff,#a9d3f5);"></div>
<svg class="b" style="left:23.4px;top:80.6px;" width="7" height="9" viewBox="0 0 7 9"><path d="M1.2 0.7L1.2 6.6L2.7 5.2L3.8 7.5L4.8 7L3.8 4.9L5.6 4.7Z" fill="#fff" stroke="#444" stroke-width="0.7" stroke-linejoin="round"/></svg>
<svg class="b" style="left:21.5px;top:95.5px;" width="10" height="9" viewBox="0 0 10 9"><path d="M0.8 4.5L4.6 0.8V3.2H9V5.8H4.6V8.2Z" fill="#c9c9c9" stroke="#b0b0b0" stroke-width="0.4"/></svg>
<svg class="b" style="left:21.5px;top:111px;" width="10" height="9" viewBox="0 0 10 9"><path d="M9.2 4.5L5.4 0.8V3.2H1V5.8H5.4V8.2Z" fill="#c9c9c9" stroke="#b0b0b0" stroke-width="0.4"/></svg>
<svg class="b" style="left:21.5px;top:126.5px;" width="10" height="10" viewBox="0 0 10 10"><rect x="0.8" y="0.8" width="8.4" height="8.4" fill="#555" stroke="#333" stroke-width="0.6"/><rect x="2" y="1.2" width="6" height="3.2" fill="#f4f4f4"/><rect x="2.6" y="6" width="4.8" height="3" fill="#ddd"/></svg>
<svg class="b" style="left:21.5px;top:143px;" width="10" height="10" viewBox="0 0 10 10"><rect x="0.7" y="0.7" width="8.6" height="8.6" fill="#f9dce8" stroke="#d0447c" stroke-width="1"/><circle cx="3.2" cy="5" r="1.6" fill="none" stroke="#c03" stroke-width="0.8"/><circle cx="6.8" cy="5" r="1.6" fill="none" stroke="#c03" stroke-width="0.8"/></svg>
<svg class="b" style="left:21.5px;top:159px;" width="10" height="10" viewBox="0 0 10 10"><circle cx="4" cy="4" r="2.9" fill="#cfe6fa" stroke="#3a79c0" stroke-width="1"/><path d="M6.2 6.2L9 9" stroke="#555" stroke-width="1.6"/></svg>
<svg class="b" style="left:21.5px;top:174.5px;" width="10" height="10" viewBox="0 0 10 10"><circle cx="4" cy="4" r="2.9" fill="#cfe6fa" stroke="#9a6fb0" stroke-width="1"/><path d="M6.2 6.2L9 9" stroke="#555" stroke-width="1.6"/></svg>
<svg class="b" style="left:21px;top:189px;" width="11" height="11" viewBox="0 0 11 11"><circle cx="5.5" cy="5.5" r="3.2" fill="#3f6fd0" stroke="#2a4fa8" stroke-width="2" stroke-dasharray="1.5 1"/><circle cx="5.5" cy="5.5" r="1.3" fill="#e8e8e8"/></svg>
<svg class="b" style="left:21px;top:205.5px;" width="11" height="11" viewBox="0 0 11 11"><circle cx="5.5" cy="5.5" r="3.2" fill="#aaa" stroke="#888" stroke-width="2" stroke-dasharray="1.5 1"/><circle cx="5.5" cy="5.5" r="1.3" fill="#e8e8e8"/></svg>
<div class="b" style="left:396px;top:70px;width:204px;height:376px;background:#e3e3e3;"></div>
<div class="b" style="left:395.2px;top:70px;width:0.9px;height:376px;background:#6e6e6e;"></div>
<div class="b" style="left:396.5px;top:70.6px;width:203.5px;height:10.6px;background:linear-gradient(#fdfdfd,#dadada);border-bottom:1px solid #b8b8b8;"></div>
<span class="t" style="left:400.8px;top:71.03px;font-size:7.3px;line-height:10.95px;color:#222;font-weight:500;transform:scaleX(0.8864);transform-origin:left center;">プロジェクト</span>
<svg class="b" style="left:592px;top:74.6px;" width="5" height="3.4" viewBox="0 0 5 3.4"><path d="M0.4 0.4L1.8 1.7L0.4 3M2.6 0.4L4 1.7L2.6 3" fill="none" stroke="#333" stroke-width="0.7"/></svg>
<div class="b" style="left:397px;top:81.5px;width:203px;height:21.5px;background:linear-gradient(#f0f0f0,#dedede);"></div>
<div class="b" style="left:399px;top:85.3px;width:14.3px;height:13.2px;border:1px solid #3b86d0;background:linear-gradient(#dff0ff,#9fcdf3);box-shadow:inset 0 0 0 1px #eaf5ff;border-radius:2.5px;"></div>
<div class="b" style="left:415.2px;top:85.3px;width:14.3px;height:13.2px;border:1px solid #8a8a8a;background:linear-gradient(#f6f6f6,#c2c2c2);box-shadow:inset 0 0 0 1px rgba(255,255,255,0.6);border-radius:2.5px;"></div>
<div class="b" style="left:432px;top:85.3px;width:14.3px;height:13.2px;border:1px solid #8a8a8a;background:linear-gradient(#f6f6f6,#c2c2c2);box-shadow:inset 0 0 0 1px rgba(255,255,255,0.6);border-radius:2.5px;"></div>
<div class="b" style="left:448.3px;top:85.3px;width:14.3px;height:13.2px;border:1px solid #8a8a8a;background:linear-gradient(#f6f6f6,#c2c2c2);box-shadow:inset 0 0 0 1px rgba(255,255,255,0.6);border-radius:2.5px;"></div>
<div class="b" style="left:464.8px;top:85.3px;width:14.3px;height:13.2px;border:1px solid #8a8a8a;background:linear-gradient(#f6f6f6,#c2c2c2);box-shadow:inset 0 0 0 1px rgba(255,255,255,0.6);border-radius:2.5px;"></div>
<svg class="b" style="left:400.6px;top:86.6px;" width="11.2" height="10.6" viewBox="0 0 11.2 10.6"><path d="M0.4 1.2H4.4L5.4 2.4H10.8V10H0.4Z" fill="#f08a24" stroke="#b85a0a" stroke-width="0.5"/><rect x="1.2" y="3.6" width="8.8" height="5.4" fill="#f7a648"/></svg>
<span class="t" style="left:402.4px;top:90.35px;font-size:4.2px;line-height:6.30px;color:#5a2a00;font-weight:700;">PRJ</span>
<svg class="b" style="left:417.6px;top:87px;" width="9.5" height="10" viewBox="0 0 9.5 10"><rect x="1.4" y="0.8" width="6.6" height="8.4" rx="0.8" fill="#f7dc82" stroke="#b8963a" stroke-width="0.6"/><path d="M0.2 2.4H1.4M0.2 4.2H1.4M0.2 6H1.4M0.2 7.8H1.4M8 2.4H9.2M8 4.2H9.2M8 6H9.2M8 7.8H9.2" stroke="#888" stroke-width="0.6"/></svg>
<svg class="b" style="left:433.6px;top:86.2px;" width="11.2" height="11.4" viewBox="0 0 11.2 11.4"><path d="M5.6 5.4L11 7.8L5.6 10.6L0.2 7.8Z" fill="#2f6fc8"/><path d="M5.6 3.2L11 5.6L5.6 8.4L0.2 5.6Z" fill="#3fa84a"/><path d="M5.6 0.6L11 3.2L5.6 6L0.2 3.2Z" fill="#e8392a"/></svg>
<svg class="b" style="left:449.9px;top:86.4px;" width="11.2" height="11.2" viewBox="0 0 11.2 11.2"><ellipse cx="5.6" cy="4.8" rx="5.2" ry="4.2" fill="#4a7ae8" stroke="#2a4fb8" stroke-width="0.5"/><path d="M6.4 8.4L8.6 10.8L8.8 7.6Z" fill="#4a7ae8"/></svg>
<span class="t" style="left:452.8px;top:88.95px;font-size:3.8px;line-height:5.70px;color:#fff;font-weight:700;">DB</span>
<svg class="b" style="left:466.4px;top:86.4px;" width="11.4" height="11.2" viewBox="0 0 11.4 11.2"><rect x="0.6" y="0.6" width="6" height="8" fill="#bcd8f4" stroke="#4a86c8" stroke-width="0.6"/><rect x="4" y="2.4" width="6.8" height="8.2" fill="#7fb4ea" stroke="#3a76b8" stroke-width="0.6"/><path d="M5 4.6H9.8M5 6.4H9.8M5 8.2H9.8" stroke="#eaf4ff" stroke-width="0.8"/><rect x="1.4" y="1.4" width="2" height="6" fill="#5a9ae0"/></svg>
<div class="b" style="left:398.3px;top:107.8px;width:55.7px;height:11px;border:1px solid #8e8e8e;border-radius:2.5px;background:linear-gradient(#fdfdfd 0,#e4e4e4 50%,#cfcfcf 100%);box-shadow:inset 0 0 0 0.6px #fff;"></div>
<span class="t" style="left:413.15000000000003px;top:108.85px;font-size:7px;line-height:10.50px;color:#222;font-weight:500;transform:scaleX(0.9286);transform-origin:left center;">新規作成</span>
<div class="b" style="left:458.3px;top:107.8px;width:28.4px;height:11px;border:1px solid #8e8e8e;border-radius:2.5px;background:linear-gradient(#fdfdfd 0,#e4e4e4 50%,#cfcfcf 100%);box-shadow:inset 0 0 0 0.6px #fff;"></div>
<span class="t" style="left:465.5px;top:108.85px;font-size:7px;line-height:10.50px;color:#222;font-weight:500;transform:scaleX(0.8750);transform-origin:left center;">開 く</span>
<div class="b" style="left:490px;top:107.8px;width:28.6px;height:11px;border:1px solid #8e8e8e;border-radius:2.5px;background:linear-gradient(#fdfdfd 0,#e4e4e4 50%,#cfcfcf 100%);box-shadow:inset 0 0 0 0.6px #fff;"></div>
<span class="t" style="left:497.3px;top:108.85px;font-size:7px;line-height:10.50px;color:#222;font-weight:500;transform:scaleX(0.8750);transform-origin:left center;">解 除</span>
<div class="b" style="left:398.2px;top:121.6px;width:198.4px;height:208.8px;background:#fff;border:1px solid #9a9a9a;"></div>
<div class="b" style="left:399.2px;top:122.6px;width:196.4px;height:10px;background:linear-gradient(#fcfcfc,#dcdcdc);border-bottom:1px solid #b4b4b4;"></div>
<span class="t" style="left:402.5px;top:122.83px;font-size:7.3px;line-height:10.95px;color:#222;font-weight:500;transform:scaleX(0.8793);transform-origin:left center;">ファイル</span>
<span class="t" style="left:572.5px;top:122.83px;font-size:7.3px;line-height:10.95px;color:#222;font-weight:500;transform:scaleX(0.8667);transform-origin:left center;">状態</span>
<div class="b" style="left:399.2px;top:144.0px;width:196.4px;height:0.9px;background:#d9d9d9;"></div>
<div class="b" style="left:399.2px;top:155.05px;width:196.4px;height:0.9px;background:#d9d9d9;"></div>
<div class="b" style="left:399.2px;top:166.1px;width:196.4px;height:0.9px;background:#d9d9d9;"></div>
<div class="b" style="left:399.2px;top:177.15px;width:196.4px;height:0.9px;background:#d9d9d9;"></div>
<div class="b" style="left:399.2px;top:188.20000000000002px;width:196.4px;height:0.9px;background:#d9d9d9;"></div>
<div class="b" style="left:399.2px;top:199.25px;width:196.4px;height:0.9px;background:#d9d9d9;"></div>
<div class="b" style="left:399.2px;top:210.3px;width:196.4px;height:0.9px;background:#d9d9d9;"></div>
<div class="b" style="left:399.2px;top:221.35px;width:196.4px;height:0.9px;background:#d9d9d9;"></div>
<div class="b" style="left:399.2px;top:232.4px;width:196.4px;height:0.9px;background:#d9d9d9;"></div>
<div class="b" style="left:399.2px;top:243.45000000000002px;width:196.4px;height:0.9px;background:#d9d9d9;"></div>
<div class="b" style="left:399.2px;top:254.5px;width:196.4px;height:0.9px;background:#d9d9d9;"></div>
<div class="b" style="left:399.2px;top:265.55px;width:196.4px;height:0.9px;background:#d9d9d9;"></div>
<div class="b" style="left:399.2px;top:276.6px;width:196.4px;height:0.9px;background:#d9d9d9;"></div>
<div class="b" style="left:399.2px;top:287.65px;width:196.4px;height:0.9px;background:#d9d9d9;"></div>
<div class="b" style="left:399.2px;top:298.7px;width:196.4px;height:0.9px;background:#d9d9d9;"></div>
<div class="b" style="left:399.2px;top:309.75px;width:196.4px;height:0.9px;background:#d9d9d9;"></div>
<div class="b" style="left:399.2px;top:320.79999999999995px;width:196.4px;height:0.9px;background:#d9d9d9;"></div>
<div class="b" style="left:399.2px;top:331.85px;width:196.4px;height:0.9px;background:#d9d9d9;"></div>
<div class="b" style="left:568px;top:122.6px;width:0.8px;height:206.8px;background:#cfcfcf;"></div>
<div class="b" style="left:399.2px;top:155.2px;width:196.4px;height:10.8px;background:#d2d2ea;"></div>
<div class="b" style="left:568px;top:155.3px;width:0.8px;height:10.7px;background:#b8b8d8;"></div>
<svg class="b" style="left:403px;top:136.3px;" width="5" height="5" viewBox="0 0 5 5"><rect x="0.4" y="0.4" width="4.2" height="4.2" fill="#f4f8fc" stroke="#8a9ab0" stroke-width="0.7"/><path d="M1.3 2.5H3.7" stroke="#345" stroke-width="0.7"/></svg>
<svg class="b" style="left:410.6px;top:134.6px;" width="9.8" height="8.6" viewBox="0 0 9.8 8.6"><rect x="0.3" y="0.3" width="9.2" height="8" fill="#f08a24" stroke="#c9691a" stroke-width="0.5"/><rect x="1" y="1" width="7.8" height="2" fill="#f9b86a"/></svg>
<span class="t" style="left:412px;top:137.85px;font-size:3.4px;line-height:5.10px;color:#5a2a00;font-weight:700;">PRJ</span>
<span class="t" style="left:424px;top:134.00px;font-size:7.2px;line-height:10.80px;color:#1a1a1a;font-weight:500;transform:scaleX(0.9457);transform-origin:left center;">4LayerSample</span>
<svg class="b" style="left:418.8px;top:146.2px;" width="8.6" height="7.4" viewBox="0 0 8.6 7.4"><rect x="0.3" y="0.3" width="8" height="6.8" fill="#ece4c8" stroke="#a89e7c" stroke-width="0.6"/></svg>
<span class="t" style="left:420.3px;top:148.60px;font-size:3.2px;line-height:4.80px;color:#6a5a2a;font-weight:700;">SCH</span>
<span class="t" style="left:432px;top:145.10px;font-size:7.2px;line-height:10.80px;color:#1a1a1a;font-weight:500;transform:scaleX(0.9355);transform-origin:left center;">4LayerSampleSCH</span>
<svg class="b" style="left:418.8px;top:157.2px;" width="8.6" height="7.4" viewBox="0 0 8.6 7.4"><rect x="0.3" y="0.3" width="8" height="6.8" fill="#3fae3f" stroke="#237a23" stroke-width="0.6"/><rect x="2.4" y="2" width="3.8" height="3" fill="none" stroke="#bfe8bf" stroke-width="0.6"/></svg>
<span class="t" style="left:432px;top:156.10px;font-size:7.2px;line-height:10.80px;color:#1a1a1a;font-weight:500;transform:scaleX(0.9426);transform-origin:left center;">4LayerSamplePCB</span>
<svg class="b" style="left:417.6px;top:169px;" width="10.4" height="6.6" viewBox="0 0 10.4 6.6"><rect x="0.3" y="0.3" width="9.8" height="6" fill="#2f66c0" stroke="#1d478f" stroke-width="0.5"/></svg>
<span class="t" style="left:419px;top:170.70px;font-size:3.6px;line-height:5.40px;color:#fff;font-weight:700;">P板</span>
<span class="t" style="left:432px;top:167.30px;font-size:7.2px;line-height:10.80px;color:#1a1a1a;font-weight:500;transform:scaleX(0.9286);transform-origin:left center;">P板.com</span>
<svg class="b" style="left:579.3px;top:135.2px;" width="7.6" height="7" viewBox="0 0 7.6 7"><rect x="0.4" y="0.4" width="6.8" height="6.2" fill="#eaf3fc" stroke="#3a78c0" stroke-width="0.8"/><rect x="0.8" y="0.8" width="6" height="1.6" fill="#4a8ad6"/><rect x="3.6" y="3.4" width="2.8" height="2.6" fill="#3a78c0"/></svg>
<svg class="b" style="left:579.3px;top:157.3px;" width="7.6" height="7" viewBox="0 0 7.6 7"><rect x="0.4" y="0.4" width="6.8" height="6.2" fill="#eaf3fc" stroke="#3a78c0" stroke-width="0.8"/><rect x="0.8" y="0.8" width="6" height="1.6" fill="#4a8ad6"/><rect x="3.6" y="3.4" width="2.8" height="2.6" fill="#3a78c0"/></svg>
<div class="b" style="left:396.5px;top:334.4px;width:203.5px;height:11px;background:linear-gradient(#fdfdfd,#dadada);border-bottom:1px solid #b8b8b8;border-top:1px solid #f8f8f8;"></div>
<span class="t" style="left:400.5px;top:335.02px;font-size:7.3px;line-height:10.95px;color:#222;font-weight:500;transform:scaleX(0.9028);transform-origin:left center;">プレビュー</span>
<svg class="b" style="left:592px;top:338.6px;" width="5" height="3.4" viewBox="0 0 5 3.4"><path d="M0.4 0.4L1.8 1.7L0.4 3M2.6 0.4L4 1.7L2.6 3" fill="none" stroke="#333" stroke-width="0.7"/></svg>
<div class="b" style="left:398.2px;top:348.6px;width:199px;height:94.3px;background:#000;"></div>
<svg class="b" style="left:0px;top:0px;" width="600" height="487" viewBox="0 0 600 487"><defs><mask id="pm"><rect x="452" y="355.4" width="91.8" height="82.2" fill="#fff"/><circle cx="459" cy="362.6" r="9.2" fill="#000"/><circle cx="536.2" cy="362.6" r="9.2" fill="#000"/><circle cx="459" cy="430.3" r="9.2" fill="#000"/><circle cx="536.2" cy="430.3" r="9.2" fill="#000"/></mask></defs><rect x="452" y="355.4" width="91.8" height="82.2" fill="#2b5a52" mask="url(#pm)"/><rect x="449.3" y="353.3" width="97.4" height="86.6" fill="none" stroke="#0c8a2c" stroke-width="0.8"/><circle cx="459" cy="362.6" r="9.2" fill="none" stroke="#0a7a2a" stroke-width="0.7"/><circle cx="536.2" cy="362.6" r="9.2" fill="none" stroke="#0a7a2a" stroke-width="0.7"/><circle cx="459" cy="430.3" r="9.2" fill="none" stroke="#0a7a2a" stroke-width="0.7"/><circle cx="536.2" cy="430.3" r="9.2" fill="none" stroke="#0a7a2a" stroke-width="0.7"/><circle cx="459" cy="362.6" r="3.2" fill="none" stroke="#e8f2b8" stroke-width="0.9"/><circle cx="459" cy="430.3" r="3.2" fill="none" stroke="#e8f2b8" stroke-width="0.9"/><circle cx="536.2" cy="430.3" r="3.2" fill="none" stroke="#e8f2b8" stroke-width="0.9"/><path d="M533.2 366V391Q533.2 393.4 536 393.4Q538.9 393.4 538.9 391V366Z" fill="#0f8a3a"/><circle cx="536.2" cy="362.6" r="6.6" fill="#0f8a3a"/><circle cx="536.2" cy="362.6" r="3" fill="#000" stroke="#ddd" stroke-width="0.7"/><rect x="479" y="357" width="35.4" height="10" fill="none" stroke="#d8d020" stroke-width="0.8"/><rect x="484" y="358.6" width="27" height="6.6" fill="#5a7a62" stroke="#cfd0a0" stroke-width="0.5" stroke-dasharray="1 0.8"/><rect x="480" y="361" width="3.4" height="5" fill="#0f8a3a" stroke="#cfd0a0" stroke-width="0.4"/><rect x="510" y="361" width="3.4" height="5" fill="#0f8a3a" stroke="#cfd0a0" stroke-width="0.4"/><rect x="494" y="354.2" width="6" height="1.6" fill="#d8d020"/><path d="M484.5 367L475.0 379.5V398.5L487.5 409.5M510.5 367L519.0 379.5V398.5L506.5 409.5" fill="none" stroke="#0e9a3a" stroke-width="0.6"/><path d="M486.2 367L476.4 380.1V397.6L487.5 408.3M508.8 367L517.6 380.1V397.6L506.5 408.3" fill="none" stroke="#6a3f8a" stroke-width="0.6"/><path d="M487.9 367L477.7 380.7V396.7L487.5 407.1M507.1 367L516.3 380.7V396.7L506.5 407.1" fill="none" stroke="#0e9a3a" stroke-width="0.6"/><path d="M489.6 367L479.1 381.3V395.8L487.5 405.9M505.4 367L515.0 381.3V395.8L506.5 405.9" fill="none" stroke="#6a3f8a" stroke-width="0.6"/><path d="M491.3 367L480.4 381.9V394.9L487.5 404.7M503.7 367L513.6 381.9V394.9L506.5 404.7" fill="none" stroke="#0e9a3a" stroke-width="0.6"/><path d="M493.0 367L481.8 382.5V394.0L487.5 403.5M502.0 367L512.2 382.5V394.0L506.5 403.5" fill="none" stroke="#6a3f8a" stroke-width="0.6"/><path d="M494.7 367L483.1 383.1V393.1L487.5 402.3M500.3 367L510.9 383.1V393.1L506.5 402.3" fill="none" stroke="#0e9a3a" stroke-width="0.6"/><path d="M496.4 367L484.4 383.7V392.2L487.5 401.1M498.6 367L509.6 383.7V392.2L506.5 401.1" fill="none" stroke="#6a3f8a" stroke-width="0.6"/><rect x="487.3" y="389.6" width="19.4" height="19.4" fill="none" stroke="#d8d8e8" stroke-width="1.6" stroke-dasharray="0.9 0.9"/><rect x="488.6" y="390.8" width="16.8" height="17" fill="none" stroke="#6a3a8a" stroke-width="0.8" stroke-dasharray="1 1"/><rect x="491.2" y="393.4" width="11.6" height="11.6" fill="#3a6a55" stroke="#d8d020" stroke-width="0.8"/><rect x="493.4" y="382" width="2.4" height="3.6" fill="none" stroke="#d8d020" stroke-width="0.7"/><rect x="496.6" y="382" width="2.4" height="3.6" fill="none" stroke="#d8d020" stroke-width="0.7"/><rect x="499.6" y="381" width="2.6" height="5.6" fill="none" stroke="#d8d020" stroke-width="0.7"/><rect x="483.4" y="409.4" width="2.6" height="4.4" fill="none" stroke="#d8d020" stroke-width="0.8"/><rect x="480.2" y="410" width="1.6" height="3" fill="#d8d020"/><rect x="480.4" y="396.6" width="1.6" height="4.4" fill="#d8d020"/><rect x="490.3" y="414.8" width="8.4" height="5.8" fill="#4a6a40" stroke="#d8d020" stroke-width="0.8"/><path d="M492.6 416V419.4M494.5 416V419.4M496.4 416V419.4" stroke="#e8e8c8" stroke-width="0.7"/><rect x="493.4" y="422.4" width="2.4" height="1.2" fill="#d8d020"/><rect x="505.4" y="410.4" width="2.6" height="3.6" fill="none" stroke="#d8d020" stroke-width="0.7"/><rect x="505.4" y="415" width="2.6" height="3.6" fill="none" stroke="#d8d020" stroke-width="0.7"/><rect x="510.4" y="409" width="1.6" height="3.4" fill="#d8d020"/><rect x="508" y="419.4" width="1.6" height="2.4" fill="#d8d020"/><path d="M498.4 407.4L504 413.2H524M497.4 407.4L505 416.6H522L525 419" fill="none" stroke="#c8a020" stroke-width="0.7"/><path d="M498.6 407.4L502 411.6" stroke="#e0402a" stroke-width="1"/><rect x="521.6" y="397.4" width="8.2" height="26" fill="#3a6a52" stroke="#d8d020" stroke-width="0.8"/><circle cx="525.7" cy="401.2" r="1.9" fill="#5a3a2a"/><circle cx="525.7" cy="407" r="1.9" fill="#2a9a4a"/><circle cx="525.7" cy="413" r="2.1" fill="#f07a4a"/><circle cx="525.7" cy="418.8" r="2.1" fill="#f07a4a"/><rect x="517.6" y="402" width="1.6" height="5" fill="#d8d020"/><path d="M445.5 440H453M449.3 436.4V443.6" stroke="#bbb" stroke-width="0.7"/><circle cx="449.3" cy="440" r="1.8" fill="none" stroke="#bbb" stroke-width="0.5"/></svg>
<div class="b" style="left:33.5px;top:433.7px;width:362.5px;height:12.3px;background:linear-gradient(#e6e6e6,#d4d4d4);"></div>
<div class="b" style="left:0px;top:446px;width:600px;height:13.5px;background:#e5e5e5;"></div>
<div class="b" style="left:0px;top:445.6px;width:600px;height:0.8px;background:#c6c6c6;"></div>
<div class="b" style="left:36.3px;top:433.7px;width:81.5px;height:10.4px;background:linear-gradient(#dcdcdc,#eeeeee);border:1px solid #a8a8a8;border-top:none;border-radius:0 0 2.5px 2.5px;"></div>
<svg class="b" style="left:39.3px;top:435.4px;" width="8.4" height="6.6" viewBox="0 0 8.4 6.6"><rect x="0.3" y="0.3" width="7.8" height="6" fill="#3f7ad0" stroke="#2a559a" stroke-width="0.6"/><rect x="1.4" y="2.2" width="5.6" height="3.2" fill="#e8f0fc"/><path d="M4.2 2.2V5.4" stroke="#3f7ad0" stroke-width="0.5"/></svg>
<span class="t" style="left:49px;top:433.92px;font-size:7.3px;line-height:10.95px;color:#333;font-weight:500;transform:scaleX(0.8824);transform-origin:left center;">スタートページ</span>
<svg class="b" style="left:108.5px;top:436.6px;" width="5" height="5" viewBox="0 0 5 5"><path d="M0.7 0.7L4.3 4.3M4.3 0.7L0.7 4.3" stroke="#666" stroke-width="0.8"/></svg>
<div class="b" style="left:120.6px;top:433.2px;width:82.2px;height:11.2px;background:#fff;border:1px solid #a0a0a0;border-top:none;border-radius:0 0 2.5px 2.5px;"></div>
<svg class="b" style="left:123.8px;top:435.2px;" width="7.4" height="6.8" viewBox="0 0 7.4 6.8"><rect x="0.3" y="0.3" width="6.8" height="6.2" fill="#3fae3f" stroke="#237a23" stroke-width="0.6"/><rect x="2" y="1.8" width="3.2" height="3" fill="none" stroke="#c8ecc8" stroke-width="0.6"/></svg>
<span class="t" style="left:133.2px;top:433.92px;font-size:7.3px;line-height:10.95px;color:#222;font-weight:500;transform:scaleX(0.9444);transform-origin:left center;">4LayerSample···</span>
<svg class="b" style="left:192.5px;top:436.6px;" width="5" height="5" viewBox="0 0 5 5"><path d="M0.7 0.7L4.3 4.3M4.3 0.7L0.7 4.3" stroke="#444" stroke-width="0.8"/></svg>
<div class="b" style="left:364.8px;top:434.3px;width:9.8px;height:11.4px;background:linear-gradient(#fafafa,#d8d8d8);border:1px solid #b4b4b4;"></div>
<svg class="b" style="left:367.8px;top:438px;" width="4" height="5" viewBox="0 0 4 5"><path d="M3.4 0.4V4.6L0.6 2.5Z" fill="#666"/></svg>
<div class="b" style="left:375px;top:434.3px;width:10px;height:11.4px;background:linear-gradient(#fafafa,#d8d8d8);border:1px solid #b4b4b4;"></div>
<svg class="b" style="left:378.4px;top:438px;" width="4" height="5" viewBox="0 0 4 5"><path d="M0.6 0.4V4.6L3.4 2.5Z" fill="#666"/></svg>
<div class="b" style="left:385.6px;top:434.3px;width:9.8px;height:11.4px;background:linear-gradient(#fafafa,#d8d8d8);border:1px solid #b4b4b4;"></div>
<svg class="b" style="left:388.40000000000003px;top:439px;" width="5" height="4" viewBox="0 0 5 4"><path d="M0.4 0.6H4.6L2.5 3.2Z" fill="#666"/></svg>
<div class="b" style="left:18.3px;top:448.6px;width:38.5px;height:10.4px;background:linear-gradient(#fdfdfd,#ececec);border:1px solid #a6a6a6;border-bottom:none;border-radius:2.5px 2.5px 0 0;"></div>
<div class="b" style="left:21.1px;top:450.3px;width:7.6px;height:7.4px;background:#444;border-radius:1px;"></div>
<span class="t" style="left:30.1px;top:449.10px;font-size:7.2px;line-height:10.80px;color:#222;font-weight:500;transform:scaleX(0.8793);transform-origin:left center;">コマンド</span>
<div class="b" style="left:22.6px;top:451.8px;width:4px;height:3.8px;background:#ddd;"></div>
<div class="b" style="left:59px;top:448.6px;width:38px;height:10.4px;background:linear-gradient(#f4f4f4,#d6d6d6);border:1px solid #a6a6a6;border-bottom:none;border-radius:2.5px 2.5px 0 0;"></div>
<div class="b" style="left:61.8px;top:450.3px;width:7.6px;height:7.4px;background:#2a2a9a;border-radius:1px;"></div>
<span class="t" style="left:63.6px;top:450.65px;font-size:5px;line-height:7.50px;color:#fff;font-weight:700;">E</span>
<span class="t" style="left:70.8px;top:449.10px;font-size:7.2px;line-height:10.80px;color:#222;font-weight:500;transform:scaleX(0.8500);transform-origin:left center;">ERC結果</span>
<div class="b" style="left:100.8px;top:448.6px;width:38.4px;height:10.4px;background:linear-gradient(#f4f4f4,#d6d6d6);border:1px solid #a6a6a6;border-bottom:none;border-radius:2.5px 2.5px 0 0;"></div>
<div class="b" style="left:103.6px;top:450.3px;width:7.6px;height:7.4px;background:#e02a1a;border-radius:1px;"></div>
<span class="t" style="left:105.39999999999999px;top:450.65px;font-size:5px;line-height:7.50px;color:#fff;font-weight:700;">D</span>
<span class="t" style="left:112.6px;top:449.10px;font-size:7.2px;line-height:10.80px;color:#222;font-weight:500;transform:scaleX(0.8500);transform-origin:left center;">DRC結果</span>
<div class="b" style="left:142.4px;top:448.6px;width:39.4px;height:10.4px;background:linear-gradient(#f4f4f4,#d6d6d6);border:1px solid #a6a6a6;border-bottom:none;border-radius:2.5px 2.5px 0 0;"></div>
<div class="b" style="left:145.20000000000002px;top:450.3px;width:7.6px;height:7.4px;background:#9a2ad8;border-radius:1px;"></div>
<span class="t" style="left:147.0px;top:450.65px;font-size:5px;line-height:7.50px;color:#fff;font-weight:700;">M</span>
<span class="t" style="left:154.20000000000002px;top:449.10px;font-size:7.2px;line-height:10.80px;color:#222;font-weight:500;transform:scaleX(0.8548);transform-origin:left center;">MRC結果</span>
<div class="b" style="left:184.2px;top:448.6px;width:37.6px;height:10.4px;background:linear-gradient(#f4f4f4,#d6d6d6);border:1px solid #a6a6a6;border-bottom:none;border-radius:2.5px 2.5px 0 0;"></div>
<div class="b" style="left:187.0px;top:450.3px;width:7.6px;height:7.4px;background:#8ab81a;border-radius:1px;"></div>
<span class="t" style="left:196.0px;top:449.10px;font-size:7.2px;line-height:10.80px;color:#222;font-weight:500;transform:scaleX(0.8448);transform-origin:left center;">検索結果</span>
<svg class="b" style="left:187.8px;top:450.9px;" width="6.6" height="6" viewBox="0 0 6.6 6"><circle cx="2.8" cy="2.6" r="1.6" fill="none" stroke="#fff" stroke-width="0.8"/><path d="M4 3.8L5.6 5.4" stroke="#fff" stroke-width="0.9"/></svg>
<div class="b" style="left:225px;top:448.6px;width:51px;height:10.4px;background:linear-gradient(#f4f4f4,#d6d6d6);border:1px solid #a6a6a6;border-bottom:none;border-radius:2.5px 2.5px 0 0;"></div>
<svg class="b" style="left:228px;top:450.4px;" width="7.4" height="7" viewBox="0 0 7.4 7"><path d="M0.4 0.4H7V4.6H4.6L3.4 6.6L3 4.6H0.4Z" fill="#e0261a"/></svg>
<span class="t" style="left:236.8px;top:449.10px;font-size:7.2px;line-height:10.80px;color:#222;font-weight:500;transform:scaleX(0.8409);transform-origin:left center;">PCB設計指示</span>
<div class="b" style="left:0px;top:459.2px;width:600px;height:14px;background:linear-gradient(#f6f6f6,#e2e2e2);border-top:1px solid #bcbcbc;"></div>
<span class="t" style="left:3px;top:461.90px;font-size:7.2px;line-height:10.80px;color:#222;font-weight:500;transform:scaleX(0.8409);transform-origin:left center;">作業層</span>
<div class="b" style="left:25.3px;top:461.7px;width:49.6px;height:9.2px;background:#fff;border:1px solid #8c8c8c;"></div>
<div class="b" style="left:75.5px;top:461.7px;width:8px;height:9.2px;background:linear-gradient(#fafafa,#d2d2d2);border:1px solid #8c8c8c;border-radius:1px;"></div>
<svg class="b" style="left:77.5px;top:465.2px;" width="4" height="3" viewBox="0 0 4 3"><path d="M0.2 0.3H3.8L2 2.6Z" fill="#222"/></svg>
<span class="t" style="left:27.900000000000002px;top:461.35px;font-size:7.4px;line-height:11.10px;color:#333;font-weight:500;transform:scaleX(0.9500);transform-origin:left center;">Top</span>
<span class="t" style="left:90px;top:461.90px;font-size:7.2px;line-height:10.80px;color:#222;font-weight:500;transform:scaleX(0.8409);transform-origin:left center;">層種類</span>
<div class="b" style="left:112px;top:461.7px;width:72.4px;height:9.2px;background:#f2f2f2;border:1px solid #b8b8b8;"></div>
<div class="b" style="left:185px;top:461.7px;width:8px;height:9.2px;background:linear-gradient(#fafafa,#d2d2d2);border:1px solid #c4c4c4;border-radius:1px;"></div>
<svg class="b" style="left:187px;top:465.2px;" width="4" height="3" viewBox="0 0 4 3"><path d="M0.2 0.3H3.8L2 2.6Z" fill="#aaa"/></svg>
<div class="b" style="left:197.5px;top:460.5px;width:1px;height:12px;background:#c8c8c8;"></div>
<span class="t" style="left:201px;top:461.90px;font-size:7.2px;line-height:10.80px;color:#222;font-weight:500;transform:scaleX(0.7895);transform-origin:left center;">直前の層 ：</span>
<div class="b" style="left:298px;top:460.5px;width:1px;height:12px;background:#c8c8c8;"></div>
<div class="b" style="left:302px;top:461.7px;width:20.4px;height:9.2px;background:#fff;border:1px solid #8c8c8c;"></div>
<div class="b" style="left:323px;top:461.7px;width:8px;height:9.2px;background:linear-gradient(#fafafa,#d2d2d2);border:1px solid #8c8c8c;border-radius:1px;"></div>
<svg class="b" style="left:325px;top:465.2px;" width="4" height="3" viewBox="0 0 4 3"><path d="M0.2 0.3H3.8L2 2.6Z" fill="#222"/></svg>
<span class="t" style="left:304.6px;top:461.35px;font-size:7.4px;line-height:11.10px;color:#333;font-weight:500;transform:scaleX(0.9583);transform-origin:left center;">mm</span>
<div class="b" style="left:340px;top:463px;width:7.4px;height:7.4px;background:linear-gradient(#5aa0e8,#2a6ac8);border:1px solid #2456a8;border-radius:1px;"></div>
<svg class="b" style="left:340.6px;top:463.4px;" width="7" height="7" viewBox="0 0 7 7"><path d="M1.2 3.4L2.8 5.2L5.8 1.2" fill="none" stroke="#fff" stroke-width="1.3"/></svg>
<span class="t" style="left:350px;top:462.15px;font-size:7px;line-height:10.50px;color:#2a62c0;font-weight:500;transform:scaleX(0.8778);transform-origin:left center;">GRID</span>
<div class="b" style="left:370.3px;top:461.7px;width:43.0px;height:9.2px;background:#fff;border:1px solid #8c8c8c;"></div>
<div class="b" style="left:413.90000000000003px;top:461.7px;width:8px;height:9.2px;background:linear-gradient(#fafafa,#d2d2d2);border:1px solid #8c8c8c;border-radius:1px;"></div>
<svg class="b" style="left:415.90000000000003px;top:465.2px;" width="4" height="3" viewBox="0 0 4 3"><path d="M0.2 0.3H3.8L2 2.6Z" fill="#222"/></svg>
<span class="t" style="left:372.90000000000003px;top:461.35px;font-size:7.4px;line-height:11.10px;color:#333;font-weight:500;transform:scaleX(0.9286);transform-origin:left center;">2.54</span>
<div class="b" style="left:431.5px;top:463px;width:7.4px;height:7.4px;background:linear-gradient(#5aa0e8,#2a6ac8);border:1px solid #2456a8;border-radius:1px;"></div>
<svg class="b" style="left:432.1px;top:463.4px;" width="7" height="7" viewBox="0 0 7 7"><path d="M1.2 3.4L2.8 5.2L5.8 1.2" fill="none" stroke="#fff" stroke-width="1.3"/></svg>
<span class="t" style="left:441.7px;top:462.15px;font-size:7px;line-height:10.50px;color:#2a62c0;font-weight:500;transform:scaleX(0.8316);transform-origin:left center;">SNAP</span>
<div class="b" style="left:461.7px;top:461.7px;width:43.199999999999996px;height:9.2px;background:#fff;border:1px solid #8c8c8c;"></div>
<div class="b" style="left:505.5px;top:461.7px;width:8px;height:9.2px;background:linear-gradient(#fafafa,#d2d2d2);border:1px solid #8c8c8c;border-radius:1px;"></div>
<svg class="b" style="left:507.5px;top:465.2px;" width="4" height="3" viewBox="0 0 4 3"><path d="M0.2 0.3H3.8L2 2.6Z" fill="#222"/></svg>
<span class="t" style="left:464.3px;top:461.35px;font-size:7.4px;line-height:11.10px;color:#333;font-weight:500;transform:scaleX(0.9286);transform-origin:left center;">0.05</span>
<div class="b" style="left:523px;top:460.5px;width:1px;height:12px;background:#c8c8c8;"></div>
<div class="b" style="left:561.7px;top:462.8px;width:15.8px;height:7.4px;background:linear-gradient(#4a8ee0,#1f5fb8);border:1px solid #1a4f9a;"></div>
<span class="t" style="left:565px;top:464.05px;font-size:4.2px;line-height:6.30px;color:#fff;font-weight:700;">DRC</span>
<div class="b" style="left:581px;top:462.8px;width:15.8px;height:7.4px;background:linear-gradient(#5ab83a,#2a8a1a);border:1px solid #1f6a12;"></div>
<span class="t" style="left:583px;top:464.05px;font-size:4.2px;line-height:6.30px;color:#fff;font-weight:700;transform:scaleX(0.8214);transform-origin:left center;">PRESS</span>
<div class="b" style="left:0px;top:473.2px;width:600px;height:13.8px;background:linear-gradient(#efefef,#dcdcdc);border-top:1px solid #bcbcbc;"></div>
<span class="t" style="left:5.8px;top:475.50px;font-size:7.2px;line-height:10.80px;color:#222;font-weight:500;transform:scaleX(0.9634);transform-origin:left center;">X:40.184281</span>
<span class="t" style="left:51.5px;top:475.50px;font-size:7.2px;line-height:10.80px;color:#222;font-weight:500;transform:scaleX(0.9825);transform-origin:left center;">Y:21.642823</span>
<div class="b" style="left:118.3px;top:474.5px;width:1px;height:12px;background:#c4c4c4;box-shadow:1px 0 0 #f8f8f8;"></div>
<div class="b" style="left:213px;top:474.5px;width:1px;height:12px;background:#c4c4c4;box-shadow:1px 0 0 #f8f8f8;"></div>
<div class="b" style="left:434px;top:474.5px;width:1px;height:12px;background:#c4c4c4;box-shadow:1px 0 0 #f8f8f8;"></div>
<span class="t" style="left:121.7px;top:475.50px;font-size:7.2px;line-height:10.80px;color:#222;font-weight:500;transform:scaleX(0.9500);transform-origin:left center;">選択</span>
<span class="t" style="left:450.8px;top:475.50px;font-size:7.2px;line-height:10.80px;color:#222;font-weight:500;transform:scaleX(0.9756);transform-origin:left center;">User ID : kawai_quadcept</span>
<div class="b" style="left:223.3px;top:19.8px;width:125.1px;height:218px;background:rgba(0,0,0,0.28);filter:blur(1.2px);"></div>
<div class="b" style="left:221.8px;top:17.8px;width:123.6px;height:218px;background:#e7e7e7;border:1px solid #bdbdbd;border-top:none;"></div>
<span class="t" style="left:242.3px;top:21.60px;font-size:7.2px;line-height:10.80px;color:#222;font-weight:500;transform:scaleX(0.9035);transform-origin:left center;">ネットクラス設定</span>
<span class="t" style="left:225.39999999999998px;top:20.57px;font-size:3.9px;line-height:5.85px;color:#2a4ae0;font-weight:700;transform:scaleX(0.9600);transform-origin:left center;">NET1</span>
<span class="t" style="left:225.39999999999998px;top:25.18px;font-size:3.9px;line-height:5.85px;color:#9a2ae0;font-weight:700;transform:scaleX(0.9600);transform-origin:left center;">NET2</span>
<span class="t" style="left:242.3px;top:35.06px;font-size:7.2px;line-height:10.80px;color:#222;font-weight:500;transform:scaleX(0.8854);transform-origin:left center;">Reference更新</span>
<svg class="b" style="left:225.2px;top:34.06px;" width="10" height="10" viewBox="0 0 10 10"><path d="M1 3.6A3 3 0 0 1 6 2L7 1V4H4L5 3A1.8 1.8 0 0 0 2.2 3.8Z" fill="#2a6ad0"/><path d="M9 3.4A3 3 0 0 1 4 5L3 6V3" fill="none" stroke="#2a6ad0" stroke-width="1"/></svg>
<span class="t" style="left:226.39999999999998px;top:40.01px;font-size:3.4px;line-height:5.10px;color:#222;font-weight:700;">REF</span>
<span class="t" style="left:242.3px;top:48.52px;font-size:7.2px;line-height:10.80px;color:#222;font-weight:500;transform:scaleX(0.8966);transform-origin:left center;">部品更新</span>
<svg class="b" style="left:225.2px;top:47.52px;" width="10" height="10" viewBox="0 0 10 10"><rect x="1" y="1.4" width="4.6" height="7.8" rx="0.8" fill="#222"/><circle cx="7.8" cy="2.4" r="1.4" fill="none" stroke="#2a6ad0" stroke-width="0.7"/></svg>
<span class="t" style="left:242.3px;top:61.98px;font-size:7.2px;line-height:10.80px;color:#222;font-weight:500;transform:scaleX(0.8971);transform-origin:left center;">DRC/MRC</span>
<svg class="b" style="left:338.4px;top:63.980000000000004px;" width="3" height="4.4" viewBox="0 0 3 4.4"><path d="M0.3 0.2V4.2L2.6 2.2Z" fill="#222"/></svg>
<svg class="b" style="left:225.2px;top:60.980000000000004px;" width="10" height="10" viewBox="0 0 10 10"><rect x="0.3" y="0.3" width="9.4" height="9.4" fill="#e8eef8" stroke="#4a5a9a" stroke-width="0.6"/><rect x="0.8" y="5" width="3.6" height="4.2" fill="#3fa83f"/><rect x="5.4" y="1" width="3.6" height="3.4" fill="#555"/><rect x="5.4" y="5.4" width="3.6" height="3.6" fill="#555"/><rect x="1" y="1" width="3.4" height="3.2" fill="#3a5ad0"/></svg>
<span class="t" style="left:242.3px;top:75.44px;font-size:7.2px;line-height:10.80px;color:#222;font-weight:500;transform:scaleX(0.8864);transform-origin:left center;">部品表</span>
<svg class="b" style="left:338.4px;top:77.44px;" width="3" height="4.4" viewBox="0 0 3 4.4"><path d="M0.3 0.2V4.2L2.6 2.2Z" fill="#222"/></svg>
<svg class="b" style="left:225.2px;top:74.44px;" width="10" height="10" viewBox="0 0 10 10"><rect x="0.3" y="0.3" width="9.4" height="9.4" fill="#ececec" stroke="#9a9a9a" stroke-width="0.5"/><rect x="0.8" y="4.8" width="8.4" height="4.4" fill="#d62a2a"/></svg>
<span class="t" style="left:226.2px;top:75.14px;font-size:3.2px;line-height:4.80px;color:#444;font-weight:700;transform:scaleX(1.1429);transform-origin:left center;">BOM</span>
<span class="t" style="left:226.2px;top:79.19px;font-size:3.8px;line-height:5.70px;color:#fff;font-weight:700;">OUT</span>
<span class="t" style="left:242.3px;top:88.90px;font-size:7.2px;line-height:10.80px;color:#222;font-weight:500;transform:scaleX(0.8889);transform-origin:left center;">ネット出力</span>
<svg class="b" style="left:338.4px;top:90.9px;" width="3" height="4.4" viewBox="0 0 3 4.4"><path d="M0.3 0.2V4.2L2.6 2.2Z" fill="#222"/></svg>
<svg class="b" style="left:225.2px;top:87.9px;" width="10" height="10" viewBox="0 0 10 10"><rect x="0.3" y="0.3" width="9.4" height="9.4" fill="#ececec" stroke="#9a9a9a" stroke-width="0.5"/><rect x="0.8" y="4.8" width="8.4" height="4.4" fill="#d62a2a"/></svg>
<span class="t" style="left:226.2px;top:88.60px;font-size:3.2px;line-height:4.80px;color:#444;font-weight:700;transform:scaleX(1.3333);transform-origin:left center;">NET</span>
<span class="t" style="left:226.2px;top:92.65px;font-size:3.8px;line-height:5.70px;color:#fff;font-weight:700;">OUT</span>
<span class="t" style="left:242.3px;top:102.36px;font-size:7.2px;line-height:10.80px;color:#222;font-weight:500;transform:scaleX(0.8889);transform-origin:left center;">ネット入力</span>
<svg class="b" style="left:338.4px;top:104.36000000000001px;" width="3" height="4.4" viewBox="0 0 3 4.4"><path d="M0.3 0.2V4.2L2.6 2.2Z" fill="#222"/></svg>
<svg class="b" style="left:225.2px;top:101.36000000000001px;" width="10" height="10" viewBox="0 0 10 10"><rect x="0.3" y="0.3" width="9.4" height="9.4" fill="#ececec" stroke="#9a9a9a" stroke-width="0.5"/><rect x="0.8" y="4.8" width="8.4" height="4.4" fill="#1f5fd0"/></svg>
<span class="t" style="left:226.2px;top:102.06px;font-size:3.2px;line-height:4.80px;color:#444;font-weight:700;transform:scaleX(1.3333);transform-origin:left center;">NET</span>
<span class="t" style="left:226.2px;top:106.11px;font-size:3.8px;line-height:5.70px;color:#fff;font-weight:700;transform:scaleX(2.0000);transform-origin:left center;">IN</span>
<span class="t" style="left:242.3px;top:115.82px;font-size:7.2px;line-height:10.80px;color:#222;font-weight:500;">ODB++</span>
<svg class="b" style="left:338.4px;top:117.82px;" width="3" height="4.4" viewBox="0 0 3 4.4"><path d="M0.3 0.2V4.2L2.6 2.2Z" fill="#222"/></svg>
<svg class="b" style="left:225.2px;top:114.82px;" width="10" height="10" viewBox="0 0 10 10"><rect x="0.3" y="0.3" width="9.4" height="9.4" fill="#ececec" stroke="#9a9a9a" stroke-width="0.5"/><rect x="0.8" y="4.8" width="8.4" height="4.4" fill="#d62a2a"/></svg>
<span class="t" style="left:226.2px;top:115.52px;font-size:3.2px;line-height:4.80px;color:#444;font-weight:700;transform:scaleX(1.1429);transform-origin:left center;">ODB</span>
<span class="t" style="left:226.2px;top:119.57px;font-size:3.8px;line-height:5.70px;color:#fff;font-weight:700;">OUT</span>
<span class="t" style="left:242.3px;top:129.28px;font-size:7.2px;line-height:10.80px;color:#222;font-weight:500;transform:scaleX(0.8621);transform-origin:left center;">ガーバー</span>
<svg class="b" style="left:338.4px;top:131.28px;" width="3" height="4.4" viewBox="0 0 3 4.4"><path d="M0.3 0.2V4.2L2.6 2.2Z" fill="#222"/></svg>
<svg class="b" style="left:225.2px;top:128.28px;" width="10" height="10" viewBox="0 0 10 10"><rect x="0.3" y="0.3" width="9.4" height="9.4" fill="#ececec" stroke="#9a9a9a" stroke-width="0.5"/><rect x="0.8" y="4.8" width="8.4" height="4.4" fill="#d62a2a"/></svg>
<span class="t" style="left:226.2px;top:128.98px;font-size:3.2px;line-height:4.80px;color:#444;font-weight:700;transform:scaleX(1.1429);transform-origin:left center;">GBR</span>
<span class="t" style="left:226.2px;top:133.03px;font-size:3.8px;line-height:5.70px;color:#fff;font-weight:700;">OUT</span>
<span class="t" style="left:242.3px;top:142.74px;font-size:7.2px;line-height:10.80px;color:#222;font-weight:500;transform:scaleX(0.8750);transform-origin:left center;">NCドリル</span>
<svg class="b" style="left:338.4px;top:144.74px;" width="3" height="4.4" viewBox="0 0 3 4.4"><path d="M0.3 0.2V4.2L2.6 2.2Z" fill="#222"/></svg>
<svg class="b" style="left:225.2px;top:141.74px;" width="10" height="10" viewBox="0 0 10 10"><rect x="0.3" y="0.3" width="9.4" height="9.4" fill="#ececec" stroke="#9a9a9a" stroke-width="0.5"/><rect x="0.8" y="4.8" width="8.4" height="4.4" fill="#d62a2a"/></svg>
<span class="t" style="left:226.2px;top:142.44px;font-size:3.2px;line-height:4.80px;color:#444;font-weight:700;transform:scaleX(1.6000);transform-origin:left center;">NC</span>
<span class="t" style="left:226.2px;top:146.49px;font-size:3.8px;line-height:5.70px;color:#fff;font-weight:700;">OUT</span>
<span class="t" style="left:242.3px;top:156.20px;font-size:7.2px;line-height:10.80px;color:#222;font-weight:500;transform:scaleX(0.8889);transform-origin:left center;">NCドリル表印刷</span>
<svg class="b" style="left:338.4px;top:158.20000000000002px;" width="3" height="4.4" viewBox="0 0 3 4.4"><path d="M0.3 0.2V4.2L2.6 2.2Z" fill="#222"/></svg>
<svg class="b" style="left:225.2px;top:155.20000000000002px;" width="10" height="10" viewBox="0 0 10 10"><rect x="2" y="0.6" width="6" height="3" fill="#fff" stroke="#777" stroke-width="0.5"/><rect x="0.6" y="3.4" width="8.8" height="3.8" rx="0.8" fill="#9a9a9a" stroke="#666" stroke-width="0.5"/><rect x="2" y="6" width="6" height="3.4" fill="#fff" stroke="#777" stroke-width="0.5"/></svg>
<span class="t" style="left:242.3px;top:169.66px;font-size:7.2px;line-height:10.80px;color:#222;font-weight:500;transform:scaleX(0.8953);transform-origin:left center;">部品座標出力</span>
<svg class="b" style="left:338.4px;top:171.66px;" width="3" height="4.4" viewBox="0 0 3 4.4"><path d="M0.3 0.2V4.2L2.6 2.2Z" fill="#222"/></svg>
<svg class="b" style="left:225.2px;top:168.66px;" width="10" height="10" viewBox="0 0 10 10"><rect x="0.3" y="0.3" width="9.4" height="9.4" fill="#ececec" stroke="#9a9a9a" stroke-width="0.5"/><rect x="0.8" y="4.8" width="8.4" height="4.4" fill="#d62a2a"/></svg>
<span class="t" style="left:226.2px;top:169.36px;font-size:3.2px;line-height:4.80px;color:#444;font-weight:700;transform:scaleX(2.0000);transform-origin:left center;">XY</span>
<span class="t" style="left:226.2px;top:173.41px;font-size:3.8px;line-height:5.70px;color:#fff;font-weight:700;">OUT</span>
<span class="t" style="left:242.3px;top:183.12px;font-size:7.2px;line-height:10.80px;color:#222;font-weight:500;transform:scaleX(0.9052);transform-origin:left center;">PCB設計指示転送</span>
<svg class="b" style="left:225.2px;top:182.12px;" width="10" height="10" viewBox="0 0 10 10"><path d="M1 0.8H9V6.4H6L4.6 9L4.2 6.4H1Z" fill="#d8261a" stroke="#9a1208" stroke-width="0.4"/></svg>
<span class="t" style="left:242.3px;top:196.58px;font-size:7.2px;line-height:10.80px;color:#222;font-weight:500;transform:scaleX(0.8966);transform-origin:left center;">差分比較</span>
<svg class="b" style="left:225.2px;top:195.58px;" width="10" height="10" viewBox="0 0 10 10"><rect x="0.6" y="0.6" width="5.6" height="6.6" fill="#f8f4e8" stroke="#9a8a5a" stroke-width="0.6"/><rect x="3.8" y="3.4" width="5.6" height="6" fill="#3fa83f" stroke="#237a23" stroke-width="0.6"/><path d="M1.6 2.4H5M1.6 4H3.4" stroke="#c33" stroke-width="0.6"/></svg>
<div class="b" style="left:222.60000000000002px;top:207.44px;width:122.19999999999999px;height:13px;background:linear-gradient(#4a8fdc,#1f5fb0);"></div>
<span class="t" style="left:242.3px;top:210.04px;font-size:7.2px;line-height:10.80px;color:#fff;font-weight:500;transform:scaleX(0.9286);transform-origin:left center;">P板.com</span>
<svg class="b" style="left:338.4px;top:212.04px;" width="3" height="4.4" viewBox="0 0 3 4.4"><path d="M0.3 0.2V4.2L2.6 2.2Z" fill="#fff"/></svg>
<svg class="b" style="left:225.2px;top:209.04px;" width="10" height="10" viewBox="0 0 10 10"><rect x="0.3" y="0.3" width="9.4" height="9.4" fill="#1f9a3f" stroke="#e8f8e8" stroke-width="0.5"/><path d="M2.2 7.4V3H6.6A1.2 1.2 0 0 1 6.6 5.4H3.6M3.4 7.4H7.6" fill="none" stroke="#fff" stroke-width="0.9"/></svg>
<span class="t" style="left:242.3px;top:223.50px;font-size:7.2px;line-height:10.80px;color:#222;font-weight:500;transform:scaleX(1.0208);transform-origin:left center;">3D描画</span>
<svg class="b" style="left:225.2px;top:222.5px;" width="10" height="10" viewBox="0 0 10 10"><path d="M0.6 8H9.4V9.4H0.6Z" fill="#2a5ab0"/><path d="M2 7.4L3.4 4.8H6.6L8 7.4Z" fill="#555"/><circle cx="7" cy="3" r="1.8" fill="#e89a2a"/></svg>
<span class="t" style="left:225.6px;top:222.90px;font-size:3.6px;line-height:5.40px;color:#222;font-weight:700;">3D</span>
<span class="t" style="left:317.2px;top:21.45px;font-size:7px;line-height:10.50px;color:#222;font-weight:500;transform:scaleX(1.0500);transform-origin:left center;">Ctrl+N</span>
<svg class="b" style="left:215px;top:200px;" width="140" height="28" viewBox="0 0 140 28"><rect x="5.3" y="6.9" width="125.2" height="14.4" rx="3.6" fill="none" stroke="#d4101c" stroke-width="2.3"/></svg>
<div class="b" style="left:348.3px;top:210.6px;width:85.8px;height:41.6px;background:rgba(0,0,0,0.3);filter:blur(1.2px);"></div>
<div class="b" style="left:346.8px;top:208.6px;width:84.6px;height:41.6px;background:#e7e7e7;border:1px solid #b4b4b4;"></div>
<span class="t" style="left:368px;top:211.50px;font-size:7.2px;line-height:10.80px;color:#222;font-weight:400;transform:scaleX(0.8889);transform-origin:left center;">見積り作成</span>
<div class="b" style="left:363px;top:223.20000000000002px;width:67.4px;height:12.6px;background:linear-gradient(#4a8fdc,#1f5fb0);"></div>
<div class="b" style="left:348.2px;top:223.20000000000002px;width:14.8px;height:12.6px;background:#f6f6f6;"></div>
<span class="t" style="left:368px;top:225.30px;font-size:7.2px;line-height:10.80px;color:#fff;font-weight:700;transform:scaleX(0.8889);transform-origin:left center;">見積り管理</span>
<span class="t" style="left:368px;top:238.90px;font-size:7.2px;line-height:10.80px;color:#222;font-weight:400;transform:scaleX(0.8793);transform-origin:left center;">注文管理</span>
<svg class="b" style="left:350.6px;top:210.6px;" width="11" height="10" viewBox="0 0 11 10"><rect x="4.4" y="1" width="6" height="8" fill="#f08a24" stroke="#c9691a" stroke-width="0.5"/><rect x="5.4" y="2" width="4" height="1.8" fill="#fbd9a6"/><path d="M0.6 5H4" stroke="#f08a24" stroke-width="1.2"/></svg>
<svg class="b" style="left:350.6px;top:224.4px;" width="11" height="10" viewBox="0 0 11 10"><rect x="0.6" y="0.6" width="6.4" height="8.6" fill="#3fa83f" stroke="#237a23" stroke-width="0.5"/><rect x="4" y="3" width="6.2" height="6.6" fill="#f08a24" stroke="#c9691a" stroke-width="0.5"/><rect x="5" y="4" width="4.2" height="1.6" fill="#fbd9a6"/></svg>
<svg class="b" style="left:350.6px;top:238px;" width="11" height="10" viewBox="0 0 11 10"><rect x="0.6" y="1.4" width="5.6" height="5.2" fill="#3fa83f" stroke="#237a23" stroke-width="0.5"/><path d="M6.2 3.4H8.8L10.2 5.2V6.6H6.2Z" fill="#888"/><circle cx="2.6" cy="7.8" r="1.3" fill="#333"/><circle cx="8" cy="7.8" r="1.3" fill="#333"/></svg>
<svg class="b" style="left:340px;top:216px;" width="100" height="28" viewBox="0 0 100 28"><rect x="6.5" y="6.9" width="86.4" height="13.2" rx="3.6" fill="none" stroke="#d4101c" stroke-width="2.3"/></svg>
<div class="b" style="left:418px;top:205.8px;width:26.6px;height:26.6px;border-radius:50%;background:rgba(215,25,32,0.9);"></div>
<span class="t" style="left:426.3px;top:208.28px;font-size:15.5px;line-height:23.25px;color:#fff;font-weight:700;">1</span>
</div></body></html>
